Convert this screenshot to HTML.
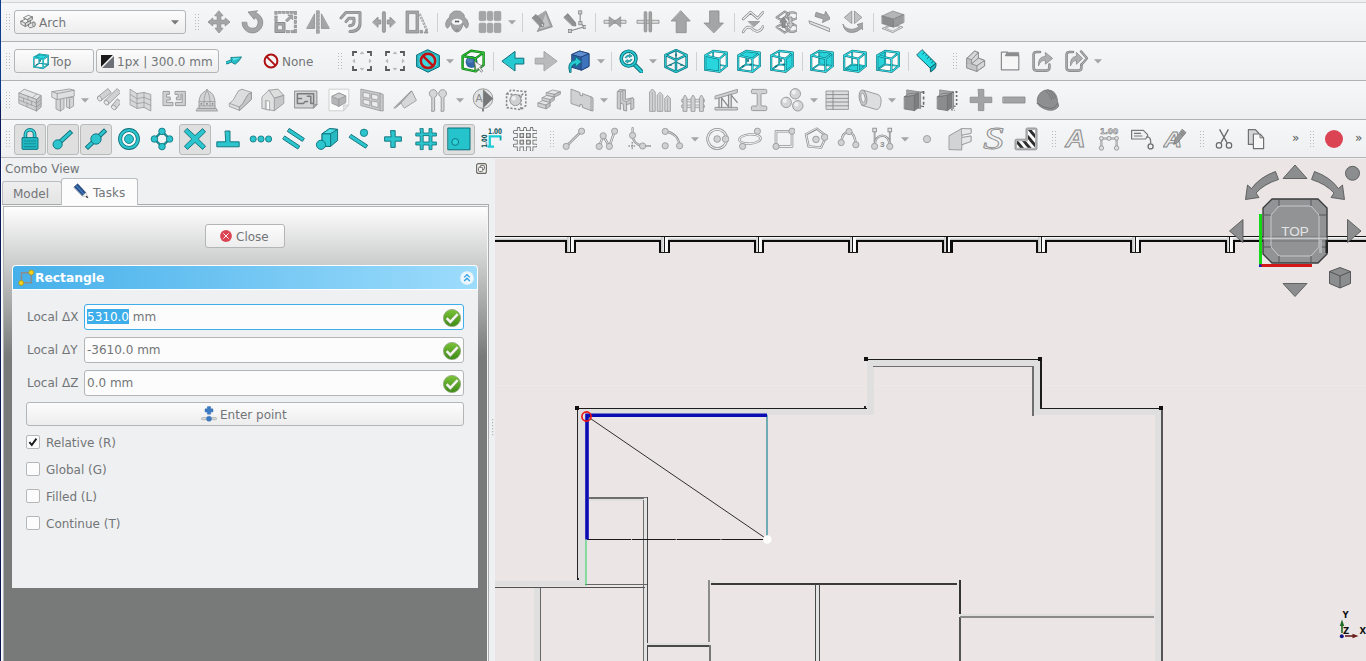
<!DOCTYPE html><html><head><meta charset="utf-8"><title>FreeCAD</title><style>
html,body{margin:0;padding:0;}
body{width:1366px;height:661px;overflow:hidden;position:relative;background:#eff0f1;font-family:"DejaVu Sans","Liberation Sans",sans-serif;font-size:12px;color:#727578;}
div,svg,span{position:absolute;box-sizing:border-box;}
.tb{left:1px;width:1365px;background:linear-gradient(#f6f7f8,#eeeff0);}
.ln{left:1px;width:1365px;height:1px;}
.btn{border:1px solid #b4b5b6;border-radius:3px;background:linear-gradient(#fcfcfc,#ededee);}
.prs{border:1px solid #b9baba;border-radius:3px;background:#dfdfdf;}
.t{white-space:nowrap;line-height:14px;}
.sep{width:1px;background:#d0d1d2;}
.cb{width:14px;height:14px;left:26px;border:1px solid #b6b7b8;border-radius:2px;background:#fcfcfc;}
.inp{left:84px;width:380px;height:26px;border:1px solid #b4b5b6;border-radius:3px;background:#fcfcfc;}
</style></head><body>
<div style="left:0;top:0;width:1px;height:661px;background:linear-gradient(#0d3f8e 0,#0c3a8a 90px,#0a1a5c 110px,#0a1250 100%)"></div>
<div style="left:1px;top:0;width:1px;height:661px;background:#fbfcfd"></div>
<div style="left:1px;top:0;width:1365px;height:2px;background:#eeeff0"></div>
<div class="ln" style="top:2px;background:#d2d3d4"></div>
<div class="tb" style="top:3px;height:38px"></div>
<div class="tb" style="top:42px;height:38px"></div>
<div class="tb" style="top:81px;height:38px"></div>
<div class="tb" style="top:120px;height:37px"></div>
<div class="ln" style="top:41px;background:#b0b1b2"></div>
<div class="ln" style="top:80px;background:#b0b1b2"></div>
<div class="ln" style="top:119px;background:#b0b1b2"></div>
<div class="ln" style="top:157px;background:#b4b5b6"></div>
<svg style="left:6px;top:14px" width="5" height="18" viewBox="0 0 5 18"><rect x="0" y="0" width="1" height="1" fill="#b9babb"/><rect x="3" y="0" width="1" height="1" fill="#b9babb"/><rect x="0" y="3" width="1" height="1" fill="#b9babb"/><rect x="3" y="3" width="1" height="1" fill="#b9babb"/><rect x="0" y="6" width="1" height="1" fill="#b9babb"/><rect x="3" y="6" width="1" height="1" fill="#b9babb"/><rect x="0" y="9" width="1" height="1" fill="#b9babb"/><rect x="3" y="9" width="1" height="1" fill="#b9babb"/><rect x="0" y="12" width="1" height="1" fill="#b9babb"/><rect x="3" y="12" width="1" height="1" fill="#b9babb"/><rect x="0" y="15" width="1" height="1" fill="#b9babb"/><rect x="3" y="15" width="1" height="1" fill="#b9babb"/></svg>
<div class="btn" style="left:14px;top:10px;width:172px;height:24px"></div>
<svg style="left:20.4px;top:13px" width="16" height="16" viewBox="0 0 24 24"><path d="M1.4 12.4L9 8.6L15.6 11.6L8 15.8Z" fill="#f5f5f5" stroke="#707172" stroke-width="1.25" stroke-linejoin="round" stroke-linecap="round"/><path d="M1.4 12.4V16.6L8 20.4V15.8Z" fill="#e6e6e6" stroke="#707172" stroke-width="1.25" stroke-linejoin="round" stroke-linecap="round"/><path d="M8 15.8V20.4L15.6 16V11.6Z" fill="#d4d4d4" stroke="#707172" stroke-width="1.25" stroke-linejoin="round" stroke-linecap="round"/><path d="M5.6 7L12.4 3.4L18.6 6L11.8 9.8Z" fill="#f5f5f5" stroke="#707172" stroke-width="1.25" stroke-linejoin="round" stroke-linecap="round"/><path d="M11.8 9.8V13.4L18.6 9.8V6Z" fill="#d4d4d4" stroke="#707172" stroke-width="1.25" stroke-linejoin="round" stroke-linecap="round"/><path d="M12.6 17.6L19.6 13.4Q22.8 12.8 22.8 17Q22.4 20.4 19.6 20.8L14.8 22.4Q12 21.6 12.6 17.6Z" fill="#e8e8e8" stroke="#707172" stroke-width="1.25" stroke-linejoin="round" stroke-linecap="round"/><ellipse cx="20.8" cy="17" rx="1.9" ry="3.6" fill="#d3dcd3" stroke="#707172" stroke-width="1.1"/></svg>
<span class="t" style="left:39px;top:16px">Arch</span>
<svg style="left:170.5px;top:19.5px" width="8" height="5" viewBox="0 0 8 5"><path d="M0 0.3H8L4 4.6Z" fill="#77797a"/></svg>
<svg style="left:195px;top:14px" width="5" height="18" viewBox="0 0 5 18"><rect x="0" y="0" width="1" height="1" fill="#b9babb"/><rect x="3" y="0" width="1" height="1" fill="#b9babb"/><rect x="0" y="3" width="1" height="1" fill="#b9babb"/><rect x="3" y="3" width="1" height="1" fill="#b9babb"/><rect x="0" y="6" width="1" height="1" fill="#b9babb"/><rect x="3" y="6" width="1" height="1" fill="#b9babb"/><rect x="0" y="9" width="1" height="1" fill="#b9babb"/><rect x="3" y="9" width="1" height="1" fill="#b9babb"/><rect x="0" y="12" width="1" height="1" fill="#b9babb"/><rect x="3" y="12" width="1" height="1" fill="#b9babb"/><rect x="0" y="15" width="1" height="1" fill="#b9babb"/><rect x="3" y="15" width="1" height="1" fill="#b9babb"/></svg>
<svg style="left:207px;top:10px" width="24" height="24" viewBox="0 0 24 24"><path d="M12 1L16 5.8H13.8V10.2H18.2V8L23 12L18.2 16V13.8H13.8V18.2H16L12 23L8 18.2H10.2V13.8H5.8V16L1 12L5.8 8V10.2H10.2V5.8H8Z" fill="#a4a5a6" stroke="#8a8b8c" stroke-width="0.8" stroke-linejoin="round" stroke-linecap="round"/></svg>
<svg style="left:240px;top:10px" width="24" height="24" viewBox="0 0 24 24"><path d="M2 12.6A10.4 10.4 0 1 0 15.6 2.7L17.6 0.8L8 2L14.2 9.5L14.4 7.4A5.6 5.6 0 1 1 6.8 12.6Z" fill="#a4a5a6" stroke="#8a8b8c" stroke-width="0.8" stroke-linejoin="round" stroke-linecap="round"/></svg>
<svg style="left:273px;top:10px" width="24" height="24" viewBox="0 0 24 24"><path d="M2 12.5H12V22.5H2Z" fill="#a4a5a6" stroke="#8a8b8c" stroke-width="1" /><path d="M4.6 15.1H9.4V19.9H4.6Z" fill="#eeeff0" stroke="#8a8b8c" stroke-width="0.8" /><rect x="1.8" y="1.3" width="2.4" height="3" fill="#a4a5a6" stroke="#8a8b8c" stroke-width="0.6"/><rect x="1.8" y="6" width="2.4" height="2.6" fill="#a4a5a6" stroke="#8a8b8c" stroke-width="0.6"/><rect x="1.8" y="9.6" width="2.4" height="2" fill="#a4a5a6" stroke="#8a8b8c" stroke-width="0.6"/><rect x="5.6" y="1.3" width="2.6" height="2.2" fill="#a4a5a6" stroke="#8a8b8c" stroke-width="0.6"/><rect x="9.6" y="1.3" width="2.6" height="2.2" fill="#a4a5a6" stroke="#8a8b8c" stroke-width="0.6"/><rect x="13.6" y="1.3" width="2.6" height="2.2" fill="#a4a5a6" stroke="#8a8b8c" stroke-width="0.6"/><rect x="17.4" y="1.3" width="3" height="2.2" fill="#a4a5a6" stroke="#8a8b8c" stroke-width="0.6"/><rect x="21.2" y="1.3" width="2.4" height="3.4" fill="#a4a5a6" stroke="#8a8b8c" stroke-width="0.6"/><rect x="21.2" y="6.2" width="2.4" height="2.8" fill="#a4a5a6" stroke="#8a8b8c" stroke-width="0.6"/><rect x="21.2" y="10.6" width="2.4" height="2.8" fill="#a4a5a6" stroke="#8a8b8c" stroke-width="0.6"/><rect x="21.2" y="15" width="2.4" height="2.8" fill="#a4a5a6" stroke="#8a8b8c" stroke-width="0.6"/><rect x="21.2" y="19.4" width="2.4" height="3.4" fill="#a4a5a6" stroke="#8a8b8c" stroke-width="0.6"/><rect x="18" y="20.6" width="3" height="2.2" fill="#a4a5a6" stroke="#8a8b8c" stroke-width="0.6"/><rect x="13.6" y="20.6" width="3" height="2.2" fill="#a4a5a6" stroke="#8a8b8c" stroke-width="0.6"/><path d="M12.5 10.2L16.3 6.4L14.8 4.9H19.6V9.7L18.1 8.2L14.3 12Z" fill="#a4a5a6" stroke="#8a8b8c" stroke-width="0.7" /></svg>
<svg style="left:306px;top:10px" width="24" height="24" viewBox="0 0 24 24"><path d="M1 18.4H8.6V4.2Z" fill="#a4a5a6" stroke="#8a8b8c" stroke-width="0.8" stroke-linejoin="round" stroke-linecap="round"/><path d="M23 18.4H15.4V4.2Z" fill="#a4a5a6" stroke="#8a8b8c" stroke-width="0.8" stroke-linejoin="round" stroke-linecap="round"/><rect x="10.4" y="0.8" width="3" height="3" fill="#a4a5a6" stroke="#8a8b8c" stroke-width="0.5"/><rect x="10.4" y="4.7" width="3" height="3" fill="#a4a5a6" stroke="#8a8b8c" stroke-width="0.5"/><rect x="10.4" y="8.6" width="3" height="3" fill="#a4a5a6" stroke="#8a8b8c" stroke-width="0.5"/><rect x="10.4" y="12.5" width="3" height="3" fill="#a4a5a6" stroke="#8a8b8c" stroke-width="0.5"/><rect x="10.4" y="16.4" width="3" height="3" fill="#a4a5a6" stroke="#8a8b8c" stroke-width="0.5"/><rect x="10.4" y="20.2" width="3" height="3" fill="#a4a5a6" stroke="#8a8b8c" stroke-width="0.5"/></svg>
<svg style="left:339px;top:10px" width="24" height="24" viewBox="0 0 24 24"><path d="M2 8L6.9 2.6H21V13.5Q21 21.4 11 21.6" fill="none" stroke="#8a8b8c" stroke-width="3" stroke-linejoin="round" stroke-linecap="round"/><path d="M2 8L6.9 2.6H21V13.5Q21 21.4 11 21.6" fill="none" stroke="#a4a5a6" stroke-width="1.6" stroke-linejoin="round" stroke-linecap="round"/><path d="M7 11.6L9.8 8.2H15V11.5Q15 15.5 10.6 15.8" fill="none" stroke="#8a8b8c" stroke-width="3" stroke-linejoin="round" stroke-linecap="round"/><path d="M7 11.6L9.8 8.2H15V11.5Q15 15.5 10.6 15.8" fill="none" stroke="#a4a5a6" stroke-width="1.6" stroke-linejoin="round" stroke-linecap="round"/></svg>
<svg style="left:372px;top:10px" width="24" height="24" viewBox="0 0 24 24"><path d="M10.4 2.8Q10.4 1.6 11.9 1.6Q13.4 1.6 13.4 2.8V21.2Q13.4 22.4 11.9 22.4Q10.4 22.4 10.4 21.2Z" fill="#a4a5a6" stroke="#8a8b8c" stroke-width="0.8" /><path d="M0.8 12L6 7V10H8.8V14H6V17Z" fill="#a4a5a6" stroke="#8a8b8c" stroke-width="0.8" stroke-linejoin="round" stroke-linecap="round"/><path d="M23.2 12L18 7V10H15.2V14H18V17Z" fill="#a4a5a6" stroke="#8a8b8c" stroke-width="0.8" stroke-linejoin="round" stroke-linecap="round"/></svg>
<svg style="left:405px;top:10px" width="24" height="24" viewBox="0 0 24 24"><path d="M1 1H13.6V23H1Z" fill="#a4a5a6" stroke="#8a8b8c" stroke-width="0.8" /><path d="M3.6 3.6H11V20.4H3.6Z" fill="#f0f1f2" stroke="#8a8b8c" stroke-width="0.8" /><path d="M14.6 4L22.4 21.5" stroke="#8a8b8c" stroke-width="2.4" stroke-dasharray="2.2 1" fill="none"/><path d="M14.6 4L22.4 21.5" stroke="#c8c9ca" stroke-width="1.2" stroke-dasharray="2.2 1" fill="none"/><path d="M15 20.4H17.6V23H15Z" fill="#a4a5a6" stroke="#8a8b8c" stroke-width="0.7" /><path d="M19 23L23 23L21.4 19.6Z" fill="#a4a5a6" stroke="#8a8b8c" stroke-width="0.7" /></svg>
<div class="sep" style="left:437px;top:13px;height:19px"></div>
<svg style="left:445px;top:10px" width="24" height="24" viewBox="0 0 24 24"><path d="M4.6 7.2Q1.6 9 0.6 13.6Q0.6 17 2.2 18.2Q4.4 17 6 13.4Q6.4 18.4 9.6 21.2Q12 23 14.4 21.2Q17.6 18.4 18 13.4Q19.6 17 21.8 18.2Q23.4 17 23.4 13.6Q22.4 9 19.4 7.2Q19.6 4 17.4 3Q15.6 0.6 12 1Q8.4 0.6 6.6 3Q4.4 4 4.6 7.2Z" fill="#a3a4a5" stroke="#8a8b8c" stroke-width="0.8" stroke-linejoin="round" stroke-linecap="round"/><ellipse cx="12" cy="11.8" rx="5.4" ry="3" fill="#f6f6f6"/><ellipse cx="10.9" cy="11.4" rx="1.1" ry="1" fill="#555"/><ellipse cx="13.1" cy="11.4" rx="1.1" ry="1" fill="#555"/><path d="M10.4 19.6L12 20.6L13.6 19.6M12 20.6V19" stroke="#7c7d7e" stroke-width="0.7" fill="none"/></svg>
<svg style="left:478px;top:10px" width="24" height="24" viewBox="0 0 24 24"><rect x="1.2" y="1.4" width="6.6" height="9.2" rx="1" fill="#a4a5a6" stroke="#97989a" stroke-width="0.7"/><rect x="1.2" y="13.2" width="6.6" height="9.4" rx="1" fill="#a4a5a6" stroke="#97989a" stroke-width="0.7"/><rect x="9.4" y="1.4" width="5.2" height="9.2" rx="1" fill="#a4a5a6" stroke="#97989a" stroke-width="0.7"/><rect x="9.4" y="13.2" width="5.2" height="9.4" rx="1" fill="#a4a5a6" stroke="#97989a" stroke-width="0.7"/><rect x="16.2" y="1.4" width="6.6" height="9.2" rx="1" fill="#a4a5a6" stroke="#97989a" stroke-width="0.7"/><rect x="16.2" y="13.2" width="6.6" height="9.4" rx="1" fill="#a4a5a6" stroke="#97989a" stroke-width="0.7"/></svg>
<svg style="left:508px;top:19.5px" width="8" height="5" viewBox="0 0 8 5"><path d="M0 0.3H8L4 4.6Z" fill="#a4a5a6"/></svg>
<div class="sep" style="left:522px;top:13px;height:19px"></div>
<svg style="left:529px;top:10px" width="24" height="24" viewBox="0 0 24 24"><path d="M17 1.3L23.4 16.8L8.2 21.5L12.2 14L6.5 8Z" fill="#a4a5a6" stroke="#8a8b8c" stroke-width="0.8" stroke-linejoin="round" stroke-linecap="round"/><path d="M16.4 4L20.8 15.8L11 19Z" fill="#c4c5c6" stroke="none" stroke-width="1" /><path d="M3.2 7.8L7 4.4L14.8 13.6L14.4 17L11 16.2Z" fill="#8f9091" stroke="#7b7c7d" stroke-width="0.7" stroke-linejoin="round" stroke-linecap="round"/><path d="M12.6 14.8L14.4 17L13.8 13.9Z" fill="#f4f4f4" stroke="none" stroke-width="1" /></svg>
<svg style="left:562px;top:10px" width="24" height="24" viewBox="0 0 24 24"><path d="M2 7.2L5.8 3.6L13.6 12.8L13.8 16L10.4 15.6Z" fill="#8f9091" stroke="#7b7c7d" stroke-width="0.7" stroke-linejoin="round" stroke-linecap="round"/><path d="M18.2 3V13L22.4 16.8L8 21" stroke="#8a8b8c" stroke-width="1.1" fill="none"/><rect x="16.6" y="0.8" width="3.2" height="3.2" fill="#c8c9ca" stroke="#8a8b8c" stroke-width="0.8"/><rect x="16.8" y="11.6" width="3.2" height="3.2" fill="#c8c9ca" stroke="#8a8b8c" stroke-width="0.8"/><rect x="21.2" y="15.4" width="3.2" height="3.2" fill="#c8c9ca" stroke="#8a8b8c" stroke-width="0.8"/><rect x="6.4" y="19.4" width="3.2" height="3.2" fill="#c8c9ca" stroke="#8a8b8c" stroke-width="0.8"/></svg>
<div class="sep" style="left:595px;top:13px;height:19px"></div>
<svg style="left:603px;top:10px" width="24" height="24" viewBox="0 0 24 24"><path d="M1 10.3H23V13.3H1Z" fill="#dcdddd" stroke="#8a8b8c" stroke-width="0.8" /><path d="M6.5 7L12.6 11.8L6.5 16.8Z" fill="#a4a5a6" stroke="#8a8b8c" stroke-width="0.8" stroke-linejoin="round" stroke-linecap="round"/><path d="M17.4 7L11.4 11.8L17.4 16.8Z" fill="#a4a5a6" stroke="#8a8b8c" stroke-width="0.8" stroke-linejoin="round" stroke-linecap="round"/></svg>
<svg style="left:636px;top:10px" width="24" height="24" viewBox="0 0 24 24"><path d="M1 10.3H23V13.3H1Z" fill="#dcdddd" stroke="#8a8b8c" stroke-width="0.8" /><path d="M8.2 2.6Q8.2 1.6 9.5 1.6Q10.8 1.6 10.8 2.6V21Q10.8 22 9.5 22Q8.2 22 8.2 21Z" fill="#a4a5a6" stroke="#8a8b8c" stroke-width="0.8" /><path d="M13 2.6Q13 1.6 14.3 1.6Q15.6 1.6 15.6 2.6V21Q15.6 22 14.3 22Q13 22 13 21Z" fill="#a4a5a6" stroke="#8a8b8c" stroke-width="0.8" /></svg>
<svg style="left:669px;top:10px" width="24" height="24" viewBox="0 0 24 24"><path d="M11.9 0.9L21.3 11H17.2V22.7H7.2V11H2.5Z" fill="#a4a5a6" stroke="#8a8b8c" stroke-width="0.8" stroke-linejoin="round" stroke-linecap="round"/></svg>
<svg style="left:702px;top:10px" width="24" height="24" viewBox="0 0 24 24"><path d="M12 22.7L21.4 13H17V0.9H7.6V13H2.3Z" fill="#a4a5a6" stroke="#8a8b8c" stroke-width="0.8" stroke-linejoin="round" stroke-linecap="round"/></svg>
<div class="sep" style="left:734px;top:13px;height:19px"></div>
<svg style="left:740px;top:10px" width="24" height="24" viewBox="0 0 24 24"><path d="M3.2 9L10.5 2.2L17.7 8.4L23 2.4" fill="none" stroke="#8a8b8c" stroke-width="2.6" stroke-linejoin="round" stroke-linecap="round"/><path d="M3.2 9L10.5 2.2L17.7 8.4L23 2.4" fill="none" stroke="#f4f4f5" stroke-width="1.1" stroke-linejoin="round" stroke-linecap="round"/><path d="M8.5 11.5H19.7L13.8 16.8Z" fill="#a4a5a6" stroke="#8a8b8c" stroke-width="0.7" stroke-linejoin="round" stroke-linecap="round"/><path d="M3.2 22Q6 16 10.5 17.4Q14 21 17 21.4Q21 21 23 16.6" fill="none" stroke="#8a8b8c" stroke-width="2.6" stroke-linejoin="round" stroke-linecap="round"/><path d="M3.2 22Q6 16 10.5 17.4Q14 21 17 21.4Q21 21 23 16.6" fill="none" stroke="#f4f4f5" stroke-width="1.1" stroke-linejoin="round" stroke-linecap="round"/></svg>
<svg style="left:773px;top:10px" width="24" height="24" viewBox="0 0 24 24"><g transform="translate(1.6 0)"><path d="M2 7.4L10 1.6L14.6 4.2L6.6 10Z" fill="none" stroke="#8b8c8d" stroke-width="2.3" stroke-linejoin="round" stroke-linecap="round"/><path d="M2 7.4L10 1.6L14.6 4.2L6.6 10Z" fill="none" stroke="#b9babb" stroke-width="1" stroke-linejoin="round" stroke-linecap="round"/><ellipse cx="17.4" cy="6" rx="5.6" ry="3.6" fill="none" stroke="#8b8c8d" stroke-width="2.3"/><ellipse cx="17.4" cy="6" rx="5.6" ry="3.6" fill="none" stroke="#b9babb" stroke-width="1"/><path d="M2 17L6.6 14.4L14.6 20L10 22.6Z" fill="none" stroke="#8b8c8d" stroke-width="2.3" stroke-linejoin="round" stroke-linecap="round"/><path d="M2 17L6.6 14.4L14.6 20L10 22.6Z" fill="none" stroke="#b9babb" stroke-width="1" stroke-linejoin="round" stroke-linecap="round"/><ellipse cx="17.4" cy="18.2" rx="5.6" ry="3.6" fill="none" stroke="#8b8c8d" stroke-width="2.3"/><ellipse cx="17.4" cy="18.2" rx="5.6" ry="3.6" fill="none" stroke="#b9babb" stroke-width="1"/><path d="M5.4 12.2L9 7.4L12.6 12.2H10.6V17.4H7.4V12.2Z" fill="#8f9091" stroke="#77787a" stroke-width="0.7" stroke-linejoin="round" stroke-linecap="round"/><path d="M14.2 7H17.4V13.4H19.4L15.8 18.4L12.2 13.4H14.2Z" fill="#c6c7c8" stroke="#77787a" stroke-width="0.7" stroke-linejoin="round" stroke-linecap="round"/></g></svg>
<svg style="left:806px;top:10px" width="24" height="24" viewBox="0 0 24 24"><path d="M3 11.2L3.8 13.6L24 21.8L23.6 18.8Z" fill="#e4e5e5" stroke="#8a8b8c" stroke-width="0.9" stroke-linejoin="round" stroke-linecap="round"/><path d="M10 2.6L9 6.4L17.4 9L16.4 12.6L24.4 8.8L19.6 1.2L18.6 4.8Z" fill="#a4a5a6" stroke="#8a8b8c" stroke-width="0.8" stroke-linejoin="round" stroke-linecap="round"/></svg>
<svg style="left:839px;top:10px" width="24" height="24" viewBox="0 0 24 24"><path d="M5.6 7.2L12.8 1V13.2Z" fill="#c0c1c2" stroke="#8a8b8c" stroke-width="0.8" stroke-linejoin="round" stroke-linecap="round"/><path d="M22.6 7.2L15.4 1V13.2Z" fill="#c0c1c2" stroke="#8a8b8c" stroke-width="0.8" stroke-linejoin="round" stroke-linecap="round"/><path d="M4 14.4Q6 19 13 19.4Q17.5 19 20 16.4L18 14.6L24.6 12.6L24 20L22.4 18.4Q18 22.6 12.4 22.6Q5 22 4 14.4Z" fill="#a4a5a6" stroke="#8a8b8c" stroke-width="0.8" stroke-linejoin="round" stroke-linecap="round"/></svg>
<div class="sep" style="left:873px;top:13px;height:19px"></div>
<svg style="left:881px;top:10px" width="24" height="24" viewBox="0 0 24 24"><path d="M1.4 18.6L11.8 22.6L22 17.2L12 14Z" fill="#eeeeef" stroke="#8a8b8c" stroke-width="0.8" stroke-linejoin="round" stroke-linecap="round"/><path d="M4.6 18.4L11.8 21L18.8 17.4L12 15.4Z" fill="#eeeeef" stroke="#8a8b8c" stroke-width="0.6" stroke-linejoin="round" stroke-linecap="round"/><path d="M1.2 5.9L11.8 1L22.6 4.6L12.4 9.2Z" fill="#b4b5b6" stroke="#858687" stroke-width="0.7" stroke-linejoin="round" stroke-linecap="round"/><path d="M1.2 5.9L12.4 9.2V17.2L1.2 13.6Z" fill="#8b8c8d" stroke="#7a7b7c" stroke-width="0.7" stroke-linejoin="round" stroke-linecap="round"/><path d="M22.6 4.6L12.4 9.2V17.2L22.6 12.6Z" fill="#9a9b9c" stroke="#7a7b7c" stroke-width="0.7" stroke-linejoin="round" stroke-linecap="round"/></svg>
<svg style="left:6px;top:53px" width="5" height="18" viewBox="0 0 5 18"><rect x="0" y="0" width="1" height="1" fill="#b9babb"/><rect x="3" y="0" width="1" height="1" fill="#b9babb"/><rect x="0" y="3" width="1" height="1" fill="#b9babb"/><rect x="3" y="3" width="1" height="1" fill="#b9babb"/><rect x="0" y="6" width="1" height="1" fill="#b9babb"/><rect x="3" y="6" width="1" height="1" fill="#b9babb"/><rect x="0" y="9" width="1" height="1" fill="#b9babb"/><rect x="3" y="9" width="1" height="1" fill="#b9babb"/><rect x="0" y="12" width="1" height="1" fill="#b9babb"/><rect x="3" y="12" width="1" height="1" fill="#b9babb"/><rect x="0" y="15" width="1" height="1" fill="#b9babb"/><rect x="3" y="15" width="1" height="1" fill="#b9babb"/></svg>
<div class="btn" style="left:14px;top:49px;width:80px;height:24px"></div>
<svg style="left:33px;top:53px" width="16" height="16" viewBox="0 0 24 24"><path d="M1.2 6.4L9.2 1.9L22.8 3.6L22.8 17L15.4 22.8L1.2 20.8Z" fill="#fdfdfd" stroke="none" stroke-width="1" /><path d="M9.2 1.9L9.2 15.3L22.8 17M9.2 15.3L1.2 20.8" fill="none" stroke="#0e7580" stroke-width="1.7" stroke-linejoin="round" stroke-linecap="round"/><path d="M9.2 1.9L9.2 15.3L22.8 17M9.2 15.3L1.2 20.8" fill="none" stroke="#2fd2d9" stroke-width="0.8" stroke-linejoin="round" stroke-linecap="round"/><path d="M1.2 6.4L15.4 9.7L22.8 3.6L9.2 1.9Z" fill="#2ad6de" stroke="none" stroke-width="1" /><path d="M1.2 6.4L15.4 9.7L15.4 22.8L1.2 20.8ZM1.2 6.4L9.2 1.9L22.8 3.6L15.4 9.7ZM15.4 9.7L22.8 3.6L22.8 17L15.4 22.8Z" fill="none" stroke="#0a6570" stroke-width="2.1" stroke-linejoin="round" stroke-linecap="round"/><path d="M1.2 6.4L15.4 9.7L15.4 22.8L1.2 20.8ZM1.2 6.4L9.2 1.9L22.8 3.6L15.4 9.7ZM15.4 9.7L22.8 3.6L22.8 17L15.4 22.8Z" fill="none" stroke="#33dbe2" stroke-width="1.15" stroke-linejoin="round" stroke-linecap="round"/><ellipse cx="11" cy="11.5" rx="0.9" ry="1.8" fill="#0b6f7a"/><ellipse cx="6" cy="17.3" rx="1.6" ry="0.8" transform="rotate(-35 6 17.3)" fill="#0b6f7a"/><ellipse cx="13.8" cy="15.2" rx="1.5" ry="0.7" fill="#0b6f7a"/></svg>
<span class="t" style="left:51px;top:55px">Top</span>
<div class="btn" style="left:96px;top:49px;width:123px;height:24px"></div>
<svg style="left:101px;top:55px" width="13" height="13" viewBox="0 0 14 14"><rect width="14" height="14" fill="#6d7177"/><path d="M0 0H13L0 13Z" fill="#1a1a1a"/><path d="M14 0L0 14" stroke="#f4f4f4" stroke-width="1.6"/></svg>
<span class="t" style="left:117px;top:55px">1px | 300.0 mm</span>
<svg style="left:226px;top:53px" width="16" height="16" viewBox="0 0 24 24"><path d="M1.4 14.6L10 11" stroke="#0b6f7a" stroke-width="4.6" stroke-linecap="round"/><path d="M1.4 14.6L10 11" stroke="#2ccbd3" stroke-width="2.8" stroke-linecap="round"/><path d="M7.6 6.8L23.4 5.8Q20 13 14 16.8Q10 16 8.4 13.4Q7 10 7.6 6.8Z" fill="#25bcc6" stroke="#0b6f7a" stroke-width="1" stroke-linejoin="round" stroke-linecap="round"/><path d="M10 8L21 7Q17 9 11 11.4Z" fill="#5fe3e8" stroke="none" stroke-width="1" /></svg>
<svg style="left:263px;top:53px" width="16" height="16" viewBox="0 0 24 24"><circle cx="12" cy="12" r="9.6" fill="#f6f6f6" stroke="#ae1212" stroke-width="3"/><path d="M5.4 5.4L18.6 18.6" stroke="#ae1212" stroke-width="3"/></svg>
<span class="t" style="left:282px;top:55px">None</span>
<svg style="left:338px;top:53px" width="5" height="18" viewBox="0 0 5 18"><rect x="0" y="0" width="1" height="1" fill="#b9babb"/><rect x="3" y="0" width="1" height="1" fill="#b9babb"/><rect x="0" y="3" width="1" height="1" fill="#b9babb"/><rect x="3" y="3" width="1" height="1" fill="#b9babb"/><rect x="0" y="6" width="1" height="1" fill="#b9babb"/><rect x="3" y="6" width="1" height="1" fill="#b9babb"/><rect x="0" y="9" width="1" height="1" fill="#b9babb"/><rect x="3" y="9" width="1" height="1" fill="#b9babb"/><rect x="0" y="12" width="1" height="1" fill="#b9babb"/><rect x="3" y="12" width="1" height="1" fill="#b9babb"/><rect x="0" y="15" width="1" height="1" fill="#b9babb"/><rect x="3" y="15" width="1" height="1" fill="#b9babb"/></svg>
<svg style="left:350px;top:49px" width="24" height="24" viewBox="0 0 24 24"><path d="M3 7V3H7M17 3H21V7M21 17V21H17M7 21H3V17" fill="none" stroke="#58595a" stroke-width="1.8"/><path d="M10.4 4.6L12 2.8L13.6 4.6Z" fill="#e6e6e7" stroke="#a0a1a2" stroke-width="0.7"/><path d="M10.4 19.4L12 21.2L13.6 19.4Z" fill="#e6e6e7" stroke="#a0a1a2" stroke-width="0.7"/><path d="M4.6 10.4L2.8 12L4.6 13.6Z" fill="#e6e6e7" stroke="#a0a1a2" stroke-width="0.7"/><path d="M19.4 10.4L21.2 12L19.4 13.6Z" fill="#e6e6e7" stroke="#a0a1a2" stroke-width="0.7"/></svg>
<svg style="left:383px;top:49px" width="24" height="24" viewBox="0 0 24 24"><path d="M3 7V3H7M17 3H21V7M21 17V21H17M7 21H3V17" fill="none" stroke="#58595a" stroke-width="1.8"/><path d="M10.4 4.6L12 2.8L13.6 4.6Z" fill="#e6e6e7" stroke="#a0a1a2" stroke-width="0.7"/><path d="M10.4 19.4L12 21.2L13.6 19.4Z" fill="#e6e6e7" stroke="#a0a1a2" stroke-width="0.7"/><path d="M4.6 10.4L2.8 12L4.6 13.6Z" fill="#e6e6e7" stroke="#a0a1a2" stroke-width="0.7"/><path d="M19.4 10.4L21.2 12L19.4 13.6Z" fill="#e6e6e7" stroke="#a0a1a2" stroke-width="0.7"/></svg>
<svg style="left:416px;top:49px" width="24" height="24" viewBox="0 0 24 24"><path d="M12 0.8L23.4 6.4V17.6L12 23.2L0.6 17.6V6.4Z" fill="#27b9c4" stroke="#0b6f7a" stroke-width="1" stroke-linejoin="round" stroke-linecap="round"/><path d="M12 3.2L21.2 7.6V16.4L12 20.8L2.8 16.4V7.6Z" fill="#3fd6dd" stroke="none" stroke-width="1" /><circle cx="12" cy="11.9" r="7.2" fill="none" stroke="#c01212" stroke-width="2.5"/><path d="M7 6.9L17 16.9" stroke="#c01212" stroke-width="2.5"/></svg>
<svg style="left:446px;top:58.5px" width="8" height="5" viewBox="0 0 8 5"><path d="M0 0.3H8L4 4.6Z" fill="#a4a5a6"/></svg>
<svg style="left:461px;top:49px" width="24" height="24" viewBox="0 0 24 24"><path d="M1.6 7L10 1.8L22.6 3.6V16L14.6 22.4L1.6 19.6Z" fill="#fcfcfc"/><circle cx="10.6" cy="13" r="6" fill="#3465a4"/><circle cx="9" cy="11" r="3" fill="#5a86c0" opacity="0.7"/><path d="M1.6 7L10 1.8L22.6 3.6V16L14.6 22.4L1.6 19.6ZM1.6 7L14.6 9.4L22.6 3.6M14.6 9.4V22.4" fill="none" stroke="#0f7a14" stroke-width="2.4" stroke-linejoin="round" stroke-linecap="round"/><path d="M1.6 7L10 1.8L22.6 3.6V16L14.6 22.4L1.6 19.6ZM1.6 7L14.6 9.4L22.6 3.6M14.6 9.4V22.4" fill="none" stroke="#2fc93a" stroke-width="1" stroke-linejoin="round" stroke-linecap="round"/><path d="M13.6 12.4L21.4 17.4L18.6 18L21.8 22L20.2 23.2L17.2 19.2L15.4 21.4Z" fill="#f2f2f2" stroke="#77787a" stroke-width="0.8" stroke-linejoin="round" stroke-linecap="round"/></svg>
<div class="sep" style="left:493px;top:52px;height:19px"></div>
<svg style="left:501px;top:49px" width="24" height="24" viewBox="0 0 24 24"><path d="M1.2 12L14 2.4V9.2H22.8V15H14V21.6Z" fill="#27c9d1" stroke="#0b6f7a" stroke-width="1" stroke-linejoin="round" stroke-linecap="round"/></svg>
<svg style="left:534px;top:49px" width="24" height="24" viewBox="0 0 24 24"><path d="M22.8 12L10 2.4V9.2H1.2V15H10V21.6Z" fill="#b9babb" stroke="#a3a4a5" stroke-width="1" stroke-linejoin="round" stroke-linecap="round"/></svg>
<svg style="left:567px;top:49px" width="24" height="24" viewBox="0 0 24 24"><path d="M5 5.4L12.6 2L22 4.6V17.4L14.4 21.2L5 18.4Z" fill="#2f5fa3" stroke="#1d3f74" stroke-width="0.9" stroke-linejoin="round" stroke-linecap="round"/><path d="M5 5.4L12.6 2L22 4.6L14.4 8Z" fill="#5f8fd0" stroke="#1d3f74" stroke-width="0.8" stroke-linejoin="round" stroke-linecap="round"/><path d="M14.4 8L22 4.6V17.4L14.4 21.2Z" fill="#3d72bd" stroke="#1d3f74" stroke-width="0.8" stroke-linejoin="round" stroke-linecap="round"/><path d="M2.6 23.2Q-0.6 13 8.4 10.8V7.6L14.6 12.8L8.4 18V14.8Q3.6 15.4 4 23Z" fill="#27c9d1" stroke="#0b6f7a" stroke-width="0.9" stroke-linejoin="round" stroke-linecap="round"/></svg>
<svg style="left:597px;top:58.5px" width="8" height="5" viewBox="0 0 8 5"><path d="M0 0.3H8L4 4.6Z" fill="#a4a5a6"/></svg>
<div class="sep" style="left:611px;top:52px;height:19px"></div>
<svg style="left:619px;top:49px" width="24" height="24" viewBox="0 0 24 24"><path d="M15.6 15.6L22.6 22.6" stroke="#0b6f7a" stroke-width="4.4" stroke-linecap="round"/><path d="M15.6 15.6L22.6 22.6" stroke="#27c9d1" stroke-width="2.4" stroke-linecap="round"/><circle cx="9.6" cy="9.6" r="7.4" fill="#f4fbfc" stroke="#0b6f7a" stroke-width="3.6"/><circle cx="9.6" cy="9.6" r="7.4" fill="none" stroke="#27c9d1" stroke-width="1.8"/><path d="M6 8.6Q7.4 5.6 10.6 6.2L10.2 5L13.2 7L10.4 8.6L10.6 7.6Q8.4 7.2 7.4 9ZM13.2 10.6Q11.8 13.6 8.6 13L9 14.2L6 12.2L8.8 10.6L8.6 11.6Q10.8 12 11.8 10.2Z" fill="#27c9d1" stroke="#0b6f7a" stroke-width="0.6"/></svg>
<svg style="left:649px;top:58.5px" width="8" height="5" viewBox="0 0 8 5"><path d="M0 0.3H8L4 4.6Z" fill="#a4a5a6"/></svg>
<svg style="left:664px;top:49px" width="24" height="24" viewBox="0 0 24 24"><path d="M12 1V13L1.4 18M12 13L22.6 18" fill="none" stroke="#14808a" stroke-width="1.3" stroke-linejoin="round" stroke-linecap="round"/><path d="M12 1L22.6 6V18L12 23L1.4 18V6ZM1.4 6L12 11L22.6 6M12 11V23" fill="none" stroke="#0b6f7a" stroke-width="2.4" stroke-linejoin="round" stroke-linecap="round"/><path d="M12 1L22.6 6V18L12 23L1.4 18V6ZM1.4 6L12 11L22.6 6M12 11V23" fill="none" stroke="#2fd0d6" stroke-width="1" stroke-linejoin="round" stroke-linecap="round"/><ellipse cx="6.6" cy="16" rx="1.5" ry="0.8" fill="#0b6f7a"/><ellipse cx="17.4" cy="16" rx="1.5" ry="0.8" fill="#0b6f7a"/><ellipse cx="12" cy="6" rx="0.8" ry="1.4" fill="#0b6f7a"/></svg>
<div class="sep" style="left:696px;top:52px;height:19px"></div>
<svg style="left:704px;top:49px" width="24" height="24" viewBox="0 0 24 24"><path d="M1.2 6.4L9.2 1.9L22.8 3.6L22.8 17L15.4 22.8L1.2 20.8Z" fill="#fdfdfd" stroke="none" stroke-width="1" /><path d="M9.2 1.9L9.2 15.3L22.8 17M9.2 15.3L1.2 20.8" fill="none" stroke="#0e7580" stroke-width="1.7" stroke-linejoin="round" stroke-linecap="round"/><path d="M9.2 1.9L9.2 15.3L22.8 17M9.2 15.3L1.2 20.8" fill="none" stroke="#2fd2d9" stroke-width="0.8" stroke-linejoin="round" stroke-linecap="round"/><path d="M1.2 6.4L15.4 9.7L15.4 22.8L1.2 20.8Z" fill="#2ad6de" stroke="none" stroke-width="1" /><path d="M1.2 6.4L15.4 9.7L15.4 22.8L1.2 20.8ZM1.2 6.4L9.2 1.9L22.8 3.6L15.4 9.7ZM15.4 9.7L22.8 3.6L22.8 17L15.4 22.8Z" fill="none" stroke="#0a6570" stroke-width="2.1" stroke-linejoin="round" stroke-linecap="round"/><path d="M1.2 6.4L15.4 9.7L15.4 22.8L1.2 20.8ZM1.2 6.4L9.2 1.9L22.8 3.6L15.4 9.7ZM15.4 9.7L22.8 3.6L22.8 17L15.4 22.8Z" fill="none" stroke="#33dbe2" stroke-width="1.15" stroke-linejoin="round" stroke-linecap="round"/></svg>
<svg style="left:737px;top:49px" width="24" height="24" viewBox="0 0 24 24"><path d="M1.2 6.4L9.2 1.9L22.8 3.6L22.8 17L15.4 22.8L1.2 20.8Z" fill="#fdfdfd" stroke="none" stroke-width="1" /><path d="M9.2 1.9L9.2 15.3L22.8 17M9.2 15.3L1.2 20.8" fill="none" stroke="#0e7580" stroke-width="1.7" stroke-linejoin="round" stroke-linecap="round"/><path d="M9.2 1.9L9.2 15.3L22.8 17M9.2 15.3L1.2 20.8" fill="none" stroke="#2fd2d9" stroke-width="0.8" stroke-linejoin="round" stroke-linecap="round"/><path d="M1.2 6.4L15.4 9.7L22.8 3.6L9.2 1.9Z" fill="#2ad6de" stroke="none" stroke-width="1" /><path d="M1.2 6.4L15.4 9.7L15.4 22.8L1.2 20.8ZM1.2 6.4L9.2 1.9L22.8 3.6L15.4 9.7ZM15.4 9.7L22.8 3.6L22.8 17L15.4 22.8Z" fill="none" stroke="#0a6570" stroke-width="2.1" stroke-linejoin="round" stroke-linecap="round"/><path d="M1.2 6.4L15.4 9.7L15.4 22.8L1.2 20.8ZM1.2 6.4L9.2 1.9L22.8 3.6L15.4 9.7ZM15.4 9.7L22.8 3.6L22.8 17L15.4 22.8Z" fill="none" stroke="#33dbe2" stroke-width="1.15" stroke-linejoin="round" stroke-linecap="round"/><ellipse cx="11" cy="11.5" rx="0.9" ry="1.8" fill="#0b6f7a"/><ellipse cx="6" cy="17.3" rx="1.6" ry="0.8" transform="rotate(-35 6 17.3)" fill="#0b6f7a"/><ellipse cx="13.8" cy="15.2" rx="1.5" ry="0.7" fill="#0b6f7a"/></svg>
<svg style="left:770px;top:49px" width="24" height="24" viewBox="0 0 24 24"><path d="M1.2 6.4L9.2 1.9L22.8 3.6L22.8 17L15.4 22.8L1.2 20.8Z" fill="#fdfdfd" stroke="none" stroke-width="1" /><path d="M9.2 1.9L9.2 15.3L22.8 17M9.2 15.3L1.2 20.8" fill="none" stroke="#0e7580" stroke-width="1.7" stroke-linejoin="round" stroke-linecap="round"/><path d="M9.2 1.9L9.2 15.3L22.8 17M9.2 15.3L1.2 20.8" fill="none" stroke="#2fd2d9" stroke-width="0.8" stroke-linejoin="round" stroke-linecap="round"/><path d="M15.4 9.7L22.8 3.6L22.8 17L15.4 22.8Z" fill="#2ad6de" stroke="none" stroke-width="1" /><path d="M1.2 6.4L15.4 9.7L15.4 22.8L1.2 20.8ZM1.2 6.4L9.2 1.9L22.8 3.6L15.4 9.7ZM15.4 9.7L22.8 3.6L22.8 17L15.4 22.8Z" fill="none" stroke="#0a6570" stroke-width="2.1" stroke-linejoin="round" stroke-linecap="round"/><path d="M1.2 6.4L15.4 9.7L15.4 22.8L1.2 20.8ZM1.2 6.4L9.2 1.9L22.8 3.6L15.4 9.7ZM15.4 9.7L22.8 3.6L22.8 17L15.4 22.8Z" fill="none" stroke="#33dbe2" stroke-width="1.15" stroke-linejoin="round" stroke-linecap="round"/><ellipse cx="11" cy="11.5" rx="0.9" ry="1.8" fill="#0b6f7a"/><ellipse cx="6" cy="17.3" rx="1.6" ry="0.8" transform="rotate(-35 6 17.3)" fill="#0b6f7a"/><ellipse cx="13.8" cy="15.2" rx="1.5" ry="0.7" fill="#0b6f7a"/></svg>
<div class="sep" style="left:802px;top:52px;height:19px"></div>
<svg style="left:810px;top:49px" width="24" height="24" viewBox="0 0 24 24"><path d="M1.2 6.4L9.2 1.9L22.8 3.6L22.8 17L15.4 22.8L1.2 20.8Z" fill="#fdfdfd" stroke="none" stroke-width="1" /><path d="M9.2 1.9L22.8 3.6L22.8 17L9.2 15.3Z" fill="#2ad3da" stroke="none" stroke-width="1" /><path d="M9.2 1.9L9.2 15.3L22.8 17M9.2 15.3L1.2 20.8" fill="none" stroke="#0e7580" stroke-width="1.7" stroke-linejoin="round" stroke-linecap="round"/><path d="M9.2 1.9L9.2 15.3L22.8 17M9.2 15.3L1.2 20.8" fill="none" stroke="#2fd2d9" stroke-width="0.8" stroke-linejoin="round" stroke-linecap="round"/><path d="M1.2 6.4L15.4 9.7L15.4 22.8L1.2 20.8ZM1.2 6.4L9.2 1.9L22.8 3.6L15.4 9.7ZM15.4 9.7L22.8 3.6L22.8 17L15.4 22.8Z" fill="none" stroke="#0a6570" stroke-width="2.1" stroke-linejoin="round" stroke-linecap="round"/><path d="M1.2 6.4L15.4 9.7L15.4 22.8L1.2 20.8ZM1.2 6.4L9.2 1.9L22.8 3.6L15.4 9.7ZM15.4 9.7L22.8 3.6L22.8 17L15.4 22.8Z" fill="none" stroke="#33dbe2" stroke-width="1.15" stroke-linejoin="round" stroke-linecap="round"/></svg>
<svg style="left:843px;top:49px" width="24" height="24" viewBox="0 0 24 24"><path d="M1.2 6.4L9.2 1.9L22.8 3.6L22.8 17L15.4 22.8L1.2 20.8Z" fill="#fdfdfd" stroke="none" stroke-width="1" /><path d="M1.2 20.8L15.4 22.8L22.8 17L9.2 15.3Z" fill="#2ad3da" stroke="none" stroke-width="1" /><path d="M9.2 1.9L9.2 15.3L22.8 17M9.2 15.3L1.2 20.8" fill="none" stroke="#0e7580" stroke-width="1.7" stroke-linejoin="round" stroke-linecap="round"/><path d="M9.2 1.9L9.2 15.3L22.8 17M9.2 15.3L1.2 20.8" fill="none" stroke="#2fd2d9" stroke-width="0.8" stroke-linejoin="round" stroke-linecap="round"/><path d="M1.2 6.4L15.4 9.7L15.4 22.8L1.2 20.8ZM1.2 6.4L9.2 1.9L22.8 3.6L15.4 9.7ZM15.4 9.7L22.8 3.6L22.8 17L15.4 22.8Z" fill="none" stroke="#0a6570" stroke-width="2.1" stroke-linejoin="round" stroke-linecap="round"/><path d="M1.2 6.4L15.4 9.7L15.4 22.8L1.2 20.8ZM1.2 6.4L9.2 1.9L22.8 3.6L15.4 9.7ZM15.4 9.7L22.8 3.6L22.8 17L15.4 22.8Z" fill="none" stroke="#33dbe2" stroke-width="1.15" stroke-linejoin="round" stroke-linecap="round"/></svg>
<svg style="left:876px;top:49px" width="24" height="24" viewBox="0 0 24 24"><path d="M1.2 6.4L9.2 1.9L22.8 3.6L22.8 17L15.4 22.8L1.2 20.8Z" fill="#fdfdfd" stroke="none" stroke-width="1" /><path d="M1.2 6.4L9.2 1.9L9.2 15.3L1.2 20.8Z" fill="#2ad3da" stroke="none" stroke-width="1" /><path d="M9.2 1.9L9.2 15.3L22.8 17M9.2 15.3L1.2 20.8" fill="none" stroke="#0e7580" stroke-width="1.7" stroke-linejoin="round" stroke-linecap="round"/><path d="M9.2 1.9L9.2 15.3L22.8 17M9.2 15.3L1.2 20.8" fill="none" stroke="#2fd2d9" stroke-width="0.8" stroke-linejoin="round" stroke-linecap="round"/><path d="M1.2 6.4L15.4 9.7L15.4 22.8L1.2 20.8ZM1.2 6.4L9.2 1.9L22.8 3.6L15.4 9.7ZM15.4 9.7L22.8 3.6L22.8 17L15.4 22.8Z" fill="none" stroke="#0a6570" stroke-width="2.1" stroke-linejoin="round" stroke-linecap="round"/><path d="M1.2 6.4L15.4 9.7L15.4 22.8L1.2 20.8ZM1.2 6.4L9.2 1.9L22.8 3.6L15.4 9.7ZM15.4 9.7L22.8 3.6L22.8 17L15.4 22.8Z" fill="none" stroke="#33dbe2" stroke-width="1.15" stroke-linejoin="round" stroke-linecap="round"/></svg>
<div class="sep" style="left:908px;top:52px;height:19px"></div>
<svg style="left:915px;top:49px" width="24" height="24" viewBox="0 0 24 24"><path d="M7.3 0.9L21 14.5L15.3 19.2L1.9 6.3Z" fill="#22dbe3" stroke="#0a5660" stroke-width="0.9" stroke-linejoin="round" stroke-linecap="round"/><path d="M21 14.5Q22 19.6 15.5 22.9L15.3 19.2Z" fill="#17b4be" stroke="#0a5660" stroke-width="0.9" stroke-linejoin="round" stroke-linecap="round"/><path d="M9.6 3.4L7.4 5.4M11.8 5.6L10.4 6.8M14 7.8L11.8 9.8M16.2 10L14.8 11.2M18.4 12.2L16.2 14.2" stroke="#0a5660" stroke-width="0.9"/></svg>
<svg style="left:953px;top:53px" width="5" height="18" viewBox="0 0 5 18"><rect x="0" y="0" width="1" height="1" fill="#b9babb"/><rect x="3" y="0" width="1" height="1" fill="#b9babb"/><rect x="0" y="3" width="1" height="1" fill="#b9babb"/><rect x="3" y="3" width="1" height="1" fill="#b9babb"/><rect x="0" y="6" width="1" height="1" fill="#b9babb"/><rect x="3" y="6" width="1" height="1" fill="#b9babb"/><rect x="0" y="9" width="1" height="1" fill="#b9babb"/><rect x="3" y="9" width="1" height="1" fill="#b9babb"/><rect x="0" y="12" width="1" height="1" fill="#b9babb"/><rect x="3" y="12" width="1" height="1" fill="#b9babb"/><rect x="0" y="15" width="1" height="1" fill="#b9babb"/><rect x="3" y="15" width="1" height="1" fill="#b9babb"/></svg>
<svg style="left:965px;top:49px" width="24" height="24" viewBox="0 0 24 24"><path d="M2 9.2L9.6 2L13.4 3.4V9L19.6 11.4V17L11.8 22.4L2 19Z" fill="#d6d7d8" stroke="#8f9091" stroke-width="0.9" stroke-linejoin="round" stroke-linecap="round"/><path d="M2 9.2L6.4 10.8L13.4 3.4M6.4 10.8V15L11.8 16.8L19.6 11.4M11.8 16.8V22.4M2 14.6L6.4 15M6.4 15L13.4 9" fill="none" stroke="#8f9091" stroke-width="0.8" stroke-linejoin="round" stroke-linecap="round"/><path d="M6.4 15L11.8 16.8V22.4L2 19V14.6Z" fill="#c4c5c6" stroke="none" stroke-width="1" /><path d="M2 9.2L6.4 10.8V15L2 14.6Z" fill="#bebfc0" stroke="none" stroke-width="1" /><path d="M2 9.2L9.6 2L13.4 3.4V9L19.6 11.4V17L11.8 22.4L2 19ZM2 9.2L6.4 10.8L13.4 3.4M6.4 10.8V15L11.8 16.8L19.6 11.4M11.8 16.8V22.4M6.4 15L13.4 9" fill="none" stroke="#8f9091" stroke-width="0.8" stroke-linejoin="round" stroke-linecap="round"/></svg>
<svg style="left:998px;top:49px" width="24" height="24" viewBox="0 0 24 24"><path d="M3.4 20.8V3.2H9.6L7.6 6.6H20.8V20.8Z" fill="#f6f6f7" stroke="#8b8c8d" stroke-width="1.2" stroke-linejoin="round" stroke-linecap="round"/><path d="M10 3.4H20.8V6.4H8Z" fill="#8b8c8d" stroke="#8b8c8d" stroke-width="0.6" stroke-linejoin="round" stroke-linecap="round"/></svg>
<svg style="left:1031px;top:49px" width="24" height="24" viewBox="0 0 24 24"><path d="M9 3H5.6Q2.6 3 2.6 6V18.6Q2.6 21.6 5.6 21.6H15.4Q18.4 21.6 18.4 18.6V15.6" fill="none" stroke="#858687" stroke-width="2.6" stroke-linecap="round"/><path d="M9 3H5.6Q2.6 3 2.6 6V18.6Q2.6 21.6 5.6 21.6H15.4Q18.4 21.6 18.4 18.6V15.6" fill="none" stroke="#a9aaab" stroke-width="1.2" stroke-linecap="round"/><path d="M7.6 16.4Q6.6 7.8 14.4 7.4V3.4L21.6 9.4L14.4 15.2V11.2Q9.6 11 7.6 16.4Z" fill="#aeafb0" stroke="#88898a" stroke-width="0.8" stroke-linejoin="round" stroke-linecap="round"/></svg>
<svg style="left:1064px;top:49px" width="24" height="24" viewBox="0 0 24 24"><path d="M9 3H5.6Q2.6 3 2.6 6V18.6Q2.6 21.6 5.6 21.6H14.4Q17.4 21.6 17.4 18.6V15.6" fill="none" stroke="#858687" stroke-width="2.6" stroke-linecap="round"/><path d="M9 3H5.6Q2.6 3 2.6 6V18.6Q2.6 21.6 5.6 21.6H14.4Q17.4 21.6 17.4 18.6V15.6" fill="none" stroke="#a9aaab" stroke-width="1.2" stroke-linecap="round"/><path d="M6.6 16.4Q5.6 7.8 12.4 7.4V3.4L18.6 9.4L12.4 15.2V11.2Q8.6 11 6.6 16.4Z" fill="#aeafb0" stroke="#88898a" stroke-width="0.8" stroke-linejoin="round" stroke-linecap="round"/><path d="M17 2.4L23 9.2L17.6 15.6" fill="none" stroke="#88898a" stroke-width="2.4" stroke-linejoin="round" stroke-linecap="round"/><path d="M17 2.4L23 9.2L17.6 15.6" fill="none" stroke="#b4b5b6" stroke-width="1" stroke-linejoin="round" stroke-linecap="round"/></svg>
<svg style="left:1094px;top:58.5px" width="8" height="5" viewBox="0 0 8 5"><path d="M0 0.3H8L4 4.6Z" fill="#a4a5a6"/></svg>
<svg style="left:6px;top:92px" width="5" height="18" viewBox="0 0 5 18"><rect x="0" y="0" width="1" height="1" fill="#b9babb"/><rect x="3" y="0" width="1" height="1" fill="#b9babb"/><rect x="0" y="3" width="1" height="1" fill="#b9babb"/><rect x="3" y="3" width="1" height="1" fill="#b9babb"/><rect x="0" y="6" width="1" height="1" fill="#b9babb"/><rect x="3" y="6" width="1" height="1" fill="#b9babb"/><rect x="0" y="9" width="1" height="1" fill="#b9babb"/><rect x="3" y="9" width="1" height="1" fill="#b9babb"/><rect x="0" y="12" width="1" height="1" fill="#b9babb"/><rect x="3" y="12" width="1" height="1" fill="#b9babb"/><rect x="0" y="15" width="1" height="1" fill="#b9babb"/><rect x="3" y="15" width="1" height="1" fill="#b9babb"/></svg>
<svg style="left:18px;top:88px" width="24" height="24" viewBox="0 0 24 24"><path d="M1.2 5L6.2 1.2L23.2 7.6L18.6 11.4Z" fill="#e4e5e6" stroke="#939495" stroke-width="0.8" stroke-linejoin="round" stroke-linecap="round"/><path d="M1.2 5L18.6 11.4V23L1.2 15.6Z" fill="#d0d1d2" stroke="#939495" stroke-width="0.8" stroke-linejoin="round" stroke-linecap="round"/><path d="M18.6 11.4L23.2 7.6V19L18.6 23Z" fill="#bfc0c1" stroke="#939495" stroke-width="0.8" stroke-linejoin="round" stroke-linecap="round"/><path d="M1.2 8.6L18.6 15.2L23.2 11.4M1.2 12.2L18.6 19L23.2 15.2M10 8.2V11.8M5.6 10.2V13.8M13.6 13.2V17M9 15V18.8M14.4 9.8L18.8 6" fill="none" stroke="#939495" stroke-width="0.7" stroke-linejoin="round" stroke-linecap="round"/></svg>
<svg style="left:51px;top:88px" width="24" height="24" viewBox="0 0 24 24"><path d="M5 9.6L5 21L9.4 23L13 20.6V10Z" fill="#d4d5d6" stroke="#939495" stroke-width="0.8" stroke-linejoin="round" stroke-linecap="round"/><path d="M9.4 11.4V23" fill="none" stroke="#939495" stroke-width="0.8" stroke-linejoin="round" stroke-linecap="round"/><path d="M15.4 10.4V19L18.6 20.4L22.6 18V9.6Z" fill="#d4d5d6" stroke="#939495" stroke-width="0.8" stroke-linejoin="round" stroke-linecap="round"/><path d="M18.6 11V20.4" fill="none" stroke="#939495" stroke-width="0.8" stroke-linejoin="round" stroke-linecap="round"/><path d="M1.2 3.6L18.4 1L23.2 2.2V8.2L6.2 11.6L1.2 9.4Z" fill="#dfe0e1" stroke="#939495" stroke-width="0.8" stroke-linejoin="round" stroke-linecap="round"/><path d="M1.2 3.6L6.2 5.6L23.2 2.2M6.2 5.6V11.6" fill="none" stroke="#939495" stroke-width="0.8" stroke-linejoin="round" stroke-linecap="round"/></svg>
<svg style="left:96px;top:88px" width="24" height="24" viewBox="0 0 24 24"><path d="M5.22421 12.6303L15.2242 4.63026L11.9758 0.569741L1.97579 8.56974Z" fill="#d0d1d2" stroke="#939495" stroke-width="0.8" stroke-linejoin="round" stroke-linecap="round"/><ellipse cx="3.6" cy="10.6" rx="1.95" ry="2.6" transform="rotate(-38.6598 3.6 10.6)" fill="#e6e7e8" stroke="#939495" stroke-width="0.8"/><path d="M12.2086 16.4679L24.8086 4.26789L21.1914 0.532112L8.59141 12.7321Z" fill="#d0d1d2" stroke="#939495" stroke-width="0.8" stroke-linejoin="round" stroke-linecap="round"/><ellipse cx="10.4" cy="14.6" rx="1.95" ry="2.6" transform="rotate(-44.076 10.4 14.6)" fill="#e6e7e8" stroke="#939495" stroke-width="0.8"/><path d="M19.8303 21.0242L25.4303 14.0242L21.3697 10.7758L15.7697 17.7758Z" fill="#d0d1d2" stroke="#939495" stroke-width="0.8" stroke-linejoin="round" stroke-linecap="round"/><ellipse cx="17.8" cy="19.4" rx="1.95" ry="2.6" transform="rotate(-51.3402 17.8 19.4)" fill="#e6e7e8" stroke="#939495" stroke-width="0.8"/></svg>
<svg style="left:129px;top:88px" width="24" height="24" viewBox="0 0 24 24"><path d="M1.4 1.4L8 5.6L15 4.4L21.8 6.4V23L15 19.4L8 20.4L1.4 17Z" fill="#d6d7d8" stroke="#939495" stroke-width="0.8" stroke-linejoin="round" stroke-linecap="round"/><path d="M8 5.6V20.4M15 4.4V19.4M1.4 6.6L8 10.6L15 9.4L21.8 12M1.4 11.8L8 15.6L15 14.4L21.8 17.4" fill="none" stroke="#939495" stroke-width="0.7" stroke-linejoin="round" stroke-linecap="round"/></svg>
<svg style="left:162px;top:88px" width="24" height="24" viewBox="0 0 24 24"><path d="M1.4 3.4H7.4V6.4H4.6V9H8.2V12H4.6V14.4H11V17.6H1.4ZM13.4 3.4H23.4V17.6H13.6V14.4H20.2V6.4H19V11.8H14.4V9.2H16.2V6.4H13.4Z" fill="#cfd0d1" stroke="#939495" stroke-width="0.9" stroke-linejoin="round" stroke-linecap="round"/></svg>
<svg style="left:195px;top:88px" width="24" height="24" viewBox="0 0 24 24"><path d="M3 20H21L22.6 23H1.4Z" fill="#c6c7c8" stroke="#939495" stroke-width="0.8" stroke-linejoin="round" stroke-linecap="round"/><path d="M4 20V13.6Q4.6 5.4 10.6 3L12 1L13.4 3Q19.4 5.4 20 13.6V20Z" fill="#d2d3d4" stroke="#939495" stroke-width="0.8" stroke-linejoin="round" stroke-linecap="round"/><path d="M4 13.6H20M4 17.8H20M9 13.6V18M15 13.6V18M9 13.6Q9.4 6 12 2.6Q14.6 6 15 13.6" fill="none" stroke="#939495" stroke-width="0.7" stroke-linejoin="round" stroke-linecap="round"/><circle cx="6.4" cy="15.8" r="0.9" fill="#7d7e7f"/><circle cx="12" cy="15.8" r="0.9" fill="#7d7e7f"/><circle cx="17.6" cy="15.8" r="0.9" fill="#7d7e7f"/></svg>
<svg style="left:228px;top:88px" width="24" height="24" viewBox="0 0 24 24"><path d="M1.6 15.4Q6 12.6 8 7Q10 1.4 14 1.2L23.4 4.4V11.4L11.6 22.4L1.6 18.6Z" fill="#dcddde" stroke="#939495" stroke-width="0.8" stroke-linejoin="round" stroke-linecap="round"/><path d="M1.6 15.4L11.6 19V22.4M11.6 19Q15.6 15.6 17.6 10.6Q19.6 5.6 23.4 4.4" fill="none" stroke="#939495" stroke-width="0.8" stroke-linejoin="round" stroke-linecap="round"/><path d="M11.6 19Q15.6 15.6 17.6 10.6Q19.6 5.6 23.4 4.4V11.4L11.6 22.4Z" fill="#c4c5c6" stroke="#939495" stroke-width="0.8" stroke-linejoin="round" stroke-linecap="round"/></svg>
<svg style="left:261px;top:88px" width="24" height="24" viewBox="0 0 24 24"><path d="M8.2 2.2L17 1.1L22.8 7.3L13.3 10.3Z" fill="#dcdddd" stroke="#939495" stroke-width="0.8" stroke-linejoin="round" stroke-linecap="round"/><path d="M13.3 10.3L22.8 7.3V15.4L13.3 22.7Z" fill="#c6c7c8" stroke="#939495" stroke-width="0.8" stroke-linejoin="round" stroke-linecap="round"/><path d="M8.2 2.2L13.3 10.3V22.7L0.9 20.5V9.5Z" fill="#dfe0e0" stroke="#939495" stroke-width="0.8" stroke-linejoin="round" stroke-linecap="round"/><path d="M4.4 21V12.4L8.6 13.2V21.8Z" fill="#fafafa" stroke="#939495" stroke-width="0.7" stroke-linejoin="round" stroke-linecap="round"/><path d="M4.4 21V12.4L5.8 12.8V21.2Z" fill="#b9babb" stroke="none" stroke-width="0.8" stroke-linejoin="round" stroke-linecap="round"/></svg>
<svg style="left:294px;top:88px" width="24" height="24" viewBox="0 0 24 24"><path d="M0.8 3H22.9V16.4L19.4 20H0.8Z" fill="#d3d4d5" stroke="#858687" stroke-width="0.9" stroke-linejoin="round" stroke-linecap="round"/><path d="M3.4 5.8H19.6V15.4H16.8V8.2H13.4M3.4 5.8V15.4H9.6L11 13.6H13.6M3.4 10.4H7.6" fill="none" stroke="#7a7b7c" stroke-width="1.5" stroke-linejoin="round" stroke-linecap="round"/><path d="M19.4 20V16.4H22.9Z" fill="#a8a9aa" stroke="#858687" stroke-width="0.7" stroke-linejoin="round" stroke-linecap="round"/></svg>
<svg style="left:327px;top:88px" width="24" height="24" viewBox="0 0 24 24"><path d="M2 1.2H21.8V17L16.6 22.8H2Z" fill="#fbfbfb" stroke="#cbcccd" stroke-width="0.9" /><path d="M21.8 17H16.6V22.8Z" fill="#e2e3e4" stroke="#cbcccd" stroke-width="0.7" /><path d="M5.2 8.2L12 5L18.8 8V14.6L11.8 18.4L5.2 15.4Z" fill="#b4b5b6" stroke="#939495" stroke-width="0.8" stroke-linejoin="round" stroke-linecap="round"/><path d="M5.2 8.2L12 5L18.8 8L11.8 11.2Z" fill="#cdcecf" stroke="#939495" stroke-width="0.8" stroke-linejoin="round" stroke-linecap="round"/><path d="M11.8 11.2V18.4" fill="none" stroke="#939495" stroke-width="0.8" stroke-linejoin="round" stroke-linecap="round"/></svg>
<svg style="left:360px;top:88px" width="24" height="24" viewBox="0 0 24 24"><path d="M1.2 1.2L20 5.2L23.2 6.4V23L19.6 22.6L1.2 17.6Z" fill="#c8c9ca" stroke="#939495" stroke-width="0.8" stroke-linejoin="round" stroke-linecap="round"/><path d="M20 5.2V22.6" fill="none" stroke="#939495" stroke-width="0.8" stroke-linejoin="round" stroke-linecap="round"/><path d="M3.4 4.2L9.8 5.6V10.4L3.4 9.2Z" fill="#ececed" stroke="#939495" stroke-width="0.7" stroke-linejoin="round" stroke-linecap="round"/><path d="M12 6L18 7.4V12L12 10.8Z" fill="#ececed" stroke="#939495" stroke-width="0.7" stroke-linejoin="round" stroke-linecap="round"/><path d="M3.4 11.4L9.8 12.6V17.4L3.4 15.6Z" fill="#ececed" stroke="#939495" stroke-width="0.7" stroke-linejoin="round" stroke-linecap="round"/><path d="M12 13L18 14.2V19.6L12 18Z" fill="#ececed" stroke="#939495" stroke-width="0.7" stroke-linejoin="round" stroke-linecap="round"/></svg>
<svg style="left:393px;top:88px" width="24" height="24" viewBox="0 0 24 24"><path d="M1 19.8L17.8 3.2L18.8 3L9 14.4L3 19.6Z" fill="#a9aaab" stroke="#8f9091" stroke-width="0.7" stroke-linejoin="round" stroke-linecap="round"/><path d="M8.2 14.6L18.8 3L23.4 12.4L11.6 20Z" fill="#d6d7d8" stroke="#939495" stroke-width="0.8" stroke-linejoin="round" stroke-linecap="round"/></svg>
<svg style="left:426px;top:88px" width="24" height="24" viewBox="0 0 24 24"><path d="M5.8 23V9.2A3.9 3.9 0 1 1 8.6 9.2V23Q7.2 24 5.8 23Z" fill="#d6d7d8" stroke="#939495" stroke-width="0.9" stroke-linejoin="round" stroke-linecap="round"/><path d="M15.2 23V9.2A3.9 3.9 0 1 1 18 9.2V23Q16.6 24 15.2 23Z" fill="#d6d7d8" stroke="#939495" stroke-width="0.9" stroke-linejoin="round" stroke-linecap="round"/></svg>
<svg style="left:471px;top:88px" width="24" height="24" viewBox="0 0 24 24"><path d="M12 19V23.4" stroke="#7a7b7c" stroke-width="1.8"/><circle cx="12" cy="10.6" r="9.8" fill="#e2e3e4" stroke="#909192" stroke-width="0.9"/><path d="M12.4 2V19.4L21.6 10.6Z" fill="#767778" stroke="#6a6b6c" stroke-width="0.6" /><text x="8" y="14.2" text-anchor="middle" font-family="Liberation Sans, sans-serif" font-size="10.5" fill="#8a8b8c">A</text></svg>
<svg style="left:504px;top:88px" width="24" height="24" viewBox="0 0 24 24"><path d="M2.6 6L7 2.2L21.8 3.6V17.6L17 21.6L2.6 19.6ZM2.6 6L17 7.6L21.8 3.6M17 7.6V21.6" fill="none" stroke="#8a8b8c" stroke-width="1.6" stroke-dasharray="2.2 1.6"/><circle cx="11.4" cy="12" r="5.6" fill="#cfd0d1" stroke="#8f9091" stroke-width="0.9"/><circle cx="9.8" cy="10.2" r="2.2" fill="#eeeeef"/></svg>
<svg style="left:537px;top:88px" width="24" height="24" viewBox="0 0 24 24"><path d="M9.6 4.6L15.6 2L23.4 3.6L17.4 6.4Z" fill="#e4e5e6" stroke="#939495" stroke-width="0.8" stroke-linejoin="round" stroke-linecap="round"/><path d="M9.6 4.6L17.4 6.4V9.2L9.6 7.4Z" fill="#cfd0d1" stroke="#939495" stroke-width="0.8" stroke-linejoin="round" stroke-linecap="round"/><path d="M17.4 6.4L23.4 3.6V6.2L17.4 9.2Z" fill="#bfc0c1" stroke="#939495" stroke-width="0.8" stroke-linejoin="round" stroke-linecap="round"/><path d="M5.4 9.6L9.6 7.4L17.4 9.2L13.2 11.6Z" fill="#e4e5e6" stroke="#939495" stroke-width="0.8" stroke-linejoin="round" stroke-linecap="round"/><path d="M5.4 9.6L13.2 11.6V14.6L5.4 12.6Z" fill="#cfd0d1" stroke="#939495" stroke-width="0.8" stroke-linejoin="round" stroke-linecap="round"/><path d="M13.2 11.6L17.4 9.2V12L13.2 14.6Z" fill="#bfc0c1" stroke="#939495" stroke-width="0.8" stroke-linejoin="round" stroke-linecap="round"/><path d="M1.2 15L5.4 12.6L13.2 14.6L9.2 17Z" fill="#e4e5e6" stroke="#939495" stroke-width="0.8" stroke-linejoin="round" stroke-linecap="round"/><path d="M1.2 15L9.2 17V20.8L1.2 18.6Z" fill="#cfd0d1" stroke="#939495" stroke-width="0.8" stroke-linejoin="round" stroke-linecap="round"/><path d="M9.2 17L13.2 14.6V18.2L9.2 20.8Z" fill="#bfc0c1" stroke="#939495" stroke-width="0.8" stroke-linejoin="round" stroke-linecap="round"/></svg>
<svg style="left:570px;top:88px" width="24" height="24" viewBox="0 0 24 24"><path d="M1.4 1.2L10 4.6V7.2L12.4 8V5.6L21 8.8L23 10V23L21 22.6L12.4 19.4V17L10 16.2V18.6L1.4 15.6Z" fill="#d0d1d2" stroke="#939495" stroke-width="0.9" stroke-linejoin="round" stroke-linecap="round"/><path d="M21 8.8V22.6" fill="none" stroke="#939495" stroke-width="0.8" stroke-linejoin="round" stroke-linecap="round"/></svg>
<svg style="left:615px;top:88px" width="24" height="24" viewBox="0 0 24 24"><path d="M2.6 3.4L5 1.4L10.4 2V11.4L17.6 9.8L18.8 10.6V20.4L15.8 22V15.4L11.6 16.6V23L8.6 22.4L8.2 16L5.6 15.2V21.4L2.6 20.4Z" fill="#cbcccd" stroke="#939495" stroke-width="0.9" stroke-linejoin="round" stroke-linecap="round"/><path d="M5.4 3.6V15M7.8 3V11.8M2.6 3.4L5.4 3.6L10.4 2M8.4 12.8L11.6 14L17.6 9.8M11.6 14V16.6M15.8 15.4V12" fill="none" stroke="#939495" stroke-width="0.7" stroke-linejoin="round" stroke-linecap="round"/></svg>
<svg style="left:648px;top:88px" width="24" height="24" viewBox="0 0 24 24"><path d="M1.6 23V4L4.4 1L7.2 4V23Z" fill="#d2d3d4" stroke="#939495" stroke-width="0.8" stroke-linejoin="round" stroke-linecap="round"/><path d="M4.4 4.2V23" fill="none" stroke="#939495" stroke-width="0.6" stroke-linejoin="round" stroke-linecap="round"/><path d="M9.2 23V7.2L12 4.2L14.8 7.2V23Z" fill="#d2d3d4" stroke="#939495" stroke-width="0.8" stroke-linejoin="round" stroke-linecap="round"/><path d="M12 7.4V23" fill="none" stroke="#939495" stroke-width="0.6" stroke-linejoin="round" stroke-linecap="round"/><path d="M16.8 23V10.4L19.6 7.4L22.4 10.4V23Z" fill="#d2d3d4" stroke="#939495" stroke-width="0.8" stroke-linejoin="round" stroke-linecap="round"/><path d="M19.6 10.6V23" fill="none" stroke="#939495" stroke-width="0.6" stroke-linejoin="round" stroke-linecap="round"/></svg>
<svg style="left:681px;top:88px" width="24" height="24" viewBox="0 0 24 24"><path d="M1 11.4H23.4V14H1ZM1 17H23.4V19.6H1Z" fill="#e2e3e4" stroke="#939495" stroke-width="0.7" stroke-linejoin="round" stroke-linecap="round"/><path d="M2 23V10L4 7L6 10V23Z" fill="#d0d1d2" stroke="#939495" stroke-width="0.8" stroke-linejoin="round" stroke-linecap="round"/><path d="M10 23V10L12 7L14 10V23Z" fill="#d0d1d2" stroke="#939495" stroke-width="0.8" stroke-linejoin="round" stroke-linecap="round"/><path d="M18.4 23V10L20.4 7L22.4 10V23Z" fill="#d0d1d2" stroke="#939495" stroke-width="0.8" stroke-linejoin="round" stroke-linecap="round"/></svg>
<svg style="left:714px;top:88px" width="24" height="24" viewBox="0 0 24 24"><path d="M1.4 8L23.4 1.4V4.6L1.4 11Z" fill="#cfd0d1" stroke="#939495" stroke-width="0.9" stroke-linejoin="round" stroke-linecap="round"/><path d="M1.4 19.4H23.4V22H1.4Z" fill="#cfd0d1" stroke="#939495" stroke-width="0.9" stroke-linejoin="round" stroke-linecap="round"/><path d="M5 10.4V19.4M7.6 9.6V19.4M14.6 7.2V19.4M17.2 6.4V19.4M7.8 10.2L14.4 18.6M17.4 7.4L23.2 14.4" fill="none" stroke="#8b8c8d" stroke-width="1.3" stroke-linejoin="round" stroke-linecap="round"/></svg>
<svg style="left:747px;top:88px" width="24" height="24" viewBox="0 0 24 24"><path d="M5.6 1.4H18.6Q19.8 1.4 19.8 2.6V4.4Q19.8 5.6 18.6 5.6H15Q14 5.6 14 6.6V17Q14 18 15 18H18.6Q19.8 18 19.8 19.2V21.4Q19.8 22.6 18.6 22.6H5.6Q4.4 22.6 4.4 21.4V19.2Q4.4 18 5.6 18H9.2Q10.2 18 10.2 17V6.6Q10.2 5.6 9.2 5.6H5.6Q4.4 5.6 4.4 4.4V2.6Q4.4 1.4 5.6 1.4Z" fill="#d0d1d2" stroke="#939495" stroke-width="0.9" stroke-linejoin="round" stroke-linecap="round"/></svg>
<svg style="left:780px;top:88px" width="24" height="24" viewBox="0 0 24 24"><circle cx="15.3" cy="5.8" r="5.2" fill="#d4d5d6" stroke="#939495" stroke-width="0.9"/><circle cx="13.9" cy="4.2" r="2.184" fill="#f0f0f1"/><circle cx="6.2" cy="14.4" r="5.2" fill="#d4d5d6" stroke="#939495" stroke-width="0.9"/><circle cx="4.8" cy="12.8" r="2.184" fill="#f0f0f1"/><circle cx="17.8" cy="17.8" r="5.2" fill="#d4d5d6" stroke="#939495" stroke-width="0.9"/><circle cx="16.4" cy="16.2" r="2.184" fill="#f0f0f1"/></svg>
<svg style="left:825px;top:88px" width="24" height="24" viewBox="0 0 24 24"><path d="M1.4 3H23.4V21.4H1.4Z" fill="#dcddde" stroke="#939495" stroke-width="0.9" stroke-linejoin="round" stroke-linecap="round"/><path d="M1.4 6.6H23.4M1.4 10.4H23.4M1.4 14H23.4M1.4 17.8H23.4M8 3V21.4" fill="none" stroke="#88898a" stroke-width="0.9" stroke-linejoin="round" stroke-linecap="round"/></svg>
<svg style="left:858px;top:88px" width="24" height="24" viewBox="0 0 24 24"><path d="M5.4 2.2L20 6.6Q23.6 8 23 14.6Q22.4 21 18.6 21.6L4 17.4Z" fill="#dddedf" stroke="#939495" stroke-width="0.9" stroke-linejoin="round" stroke-linecap="round"/><ellipse cx="5" cy="9.8" rx="3.8" ry="7.8" transform="rotate(-8 5 9.8)" fill="#c9cacb" stroke="#939495" stroke-width="0.9"/><ellipse cx="5" cy="9.8" rx="2" ry="4.6" transform="rotate(-8 5 9.8)" fill="#f2f2f3" stroke="#939495" stroke-width="0.8"/></svg>
<svg style="left:903px;top:88px" width="24" height="24" viewBox="0 0 24 24"><path d="M4 2L17.6 4V20.6L4 18Z" fill="#a5a6a7" stroke="#808182" stroke-width="0.8" stroke-linejoin="round" stroke-linecap="round"/><path d="M1.6 8.6L11.6 7V22.6L1.6 21Z" fill="#8b8c8d" stroke="#6f7071" stroke-width="0.8" stroke-linejoin="round" stroke-linecap="round"/><path d="M1.6 8.6L6 5.6L15.6 5L11.6 7Z" fill="#a9aaab" stroke="#6f7071" stroke-width="0.7" stroke-linejoin="round" stroke-linecap="round"/><path d="M11.6 7L15.6 5V19.6L11.6 22.6Z" fill="#7d7e7f" stroke="#6f7071" stroke-width="0.7" stroke-linejoin="round" stroke-linecap="round"/><path d="M20.6 3V18.4" stroke="#6a6b6c" stroke-width="1.6" stroke-dasharray="3 2.4"/><path d="M17.6 4.4L21 3.6M17.6 18L21 18.6" stroke="#6a6b6c" stroke-width="1.2"/></svg>
<svg style="left:936px;top:88px" width="24" height="24" viewBox="0 0 24 24"><path d="M4 2L17.6 4V20.6L4 18Z" fill="#a5a6a7" stroke="#808182" stroke-width="0.8" stroke-linejoin="round" stroke-linecap="round"/><path d="M1.6 8.6L11.6 7V22.6L1.6 21Z" fill="#8b8c8d" stroke="#6f7071" stroke-width="0.8" stroke-linejoin="round" stroke-linecap="round"/><path d="M1.6 8.6L6 5.6L15.6 5L11.6 7Z" fill="#a9aaab" stroke="#6f7071" stroke-width="0.7" stroke-linejoin="round" stroke-linecap="round"/><path d="M11.6 7L15.6 5V19.6L11.6 22.6Z" fill="#7d7e7f" stroke="#6f7071" stroke-width="0.7" stroke-linejoin="round" stroke-linecap="round"/><path d="M20.6 3V18.4" stroke="#6a6b6c" stroke-width="1.6" stroke-dasharray="2 2"/><path d="M16 4.4L21 3.6M17.6 18L21 18.6M15 21.6L19 22.4" stroke="#6a6b6c" stroke-width="1.1" stroke-dasharray="2 1.4"/></svg>
<svg style="left:969px;top:88px" width="24" height="24" viewBox="0 0 24 24"><path d="M9.4 1.4H14.8V9.2H22.8V14.6H14.8V22.6H9.4V14.6H1.2V9.2H9.4Z" fill="#a2a3a4" stroke="#8d8e8f" stroke-width="0.9" stroke-linejoin="round" stroke-linecap="round"/></svg>
<svg style="left:1002px;top:88px" width="24" height="24" viewBox="0 0 24 24"><path d="M1.2 9H23V15H1.2Z" fill="#a2a3a4" stroke="#8d8e8f" stroke-width="0.9" stroke-linejoin="round" stroke-linecap="round"/></svg>
<svg style="left:1035px;top:88px" width="24" height="24" viewBox="0 0 24 24"><path d="M2.4 15.6Q1 7 8 3Q13 0.4 18 3.4Q22.4 6.6 22.6 14.6Q24.4 16.6 23.2 19Q19 23.4 12.6 22Q5 20 2.4 15.6Z" fill="#8e8f90" stroke="#77787a" stroke-width="0.8" stroke-linejoin="round" stroke-linecap="round"/><path d="M2.6 15.4Q8 20 15 20.4Q20 20.4 22.8 15" fill="none" stroke="#6e6f70" stroke-width="0.9" stroke-linejoin="round" stroke-linecap="round"/><path d="M10.6 2Q14.6 6 16.4 11.6M13 1.6Q17 5.4 18.6 10.8M15.6 2.2Q19.4 5.6 20.6 10" fill="none" stroke="#747576" stroke-width="0.9" stroke-linejoin="round" stroke-linecap="round"/></svg>
<svg style="left:81px;top:97.5px" width="8" height="5" viewBox="0 0 8 5"><path d="M0 0.3H8L4 4.6Z" fill="#a4a5a6"/></svg>
<svg style="left:456px;top:97.5px" width="8" height="5" viewBox="0 0 8 5"><path d="M0 0.3H8L4 4.6Z" fill="#a4a5a6"/></svg>
<svg style="left:600px;top:97.5px" width="8" height="5" viewBox="0 0 8 5"><path d="M0 0.3H8L4 4.6Z" fill="#a4a5a6"/></svg>
<svg style="left:810px;top:97.5px" width="8" height="5" viewBox="0 0 8 5"><path d="M0 0.3H8L4 4.6Z" fill="#a4a5a6"/></svg>
<svg style="left:888px;top:97.5px" width="8" height="5" viewBox="0 0 8 5"><path d="M0 0.3H8L4 4.6Z" fill="#a4a5a6"/></svg>
<svg style="left:6px;top:131px" width="5" height="18" viewBox="0 0 5 18"><rect x="0" y="0" width="1" height="1" fill="#b9babb"/><rect x="3" y="0" width="1" height="1" fill="#b9babb"/><rect x="0" y="3" width="1" height="1" fill="#b9babb"/><rect x="3" y="3" width="1" height="1" fill="#b9babb"/><rect x="0" y="6" width="1" height="1" fill="#b9babb"/><rect x="3" y="6" width="1" height="1" fill="#b9babb"/><rect x="0" y="9" width="1" height="1" fill="#b9babb"/><rect x="3" y="9" width="1" height="1" fill="#b9babb"/><rect x="0" y="12" width="1" height="1" fill="#b9babb"/><rect x="3" y="12" width="1" height="1" fill="#b9babb"/><rect x="0" y="15" width="1" height="1" fill="#b9babb"/><rect x="3" y="15" width="1" height="1" fill="#b9babb"/></svg>
<div class="prs" style="left:14px;top:124px;width:32px;height:31px"></div>
<div class="prs" style="left:47px;top:124px;width:32px;height:31px"></div>
<div class="prs" style="left:80px;top:124px;width:32px;height:31px"></div>
<div class="prs" style="left:179px;top:124px;width:32px;height:31px"></div>
<div class="prs" style="left:443px;top:124px;width:32px;height:31px"></div>
<svg style="left:18px;top:127px" width="24" height="24" viewBox="0 0 24 24"><path d="M7.4 11V7.4A4.6 4.6 0 0 1 16.6 7.4V11" fill="none" stroke="#0b6f7a" stroke-width="3.6"/><path d="M7.4 11V7.4A4.6 4.6 0 0 1 16.6 7.4V11" fill="none" stroke="#36d3da" stroke-width="1.9"/><path d="M4.6 10.6H19.4Q20 10.6 20 11.2V21.4Q20 22.4 19 22.4H5Q4 22.4 4 21.4V11.2Q4 10.6 4.6 10.6Z" fill="#22b8c2" stroke="#0b6f7a" stroke-width="0.9" stroke-linejoin="round" stroke-linecap="round"/><path d="M6 14H18M6 16.8H18M6 19.6H18" stroke="#178f9a" stroke-width="1.1"/></svg>
<svg style="left:51px;top:127px" width="24" height="24" viewBox="0 0 24 24"><path d="M8 16L20.6 4.4" stroke="#0b6f7a" stroke-width="4.6"/><path d="M8.6 15.4L20 5" stroke="#2cc5cd" stroke-width="2.8"/><circle cx="6.6" cy="17.4" r="4.6" fill="#2cc5cd" stroke="#0b6f7a" stroke-width="0.9"/></svg>
<svg style="left:84px;top:127px" width="24" height="24" viewBox="0 0 24 24"><path d="M2.4 21.4L21.6 3" stroke="#0b6f7a" stroke-width="4.6"/><path d="M3 20.8L21 3.6" stroke="#2cc5cd" stroke-width="2.8"/><circle cx="12" cy="12" r="5.2" fill="#2cc5cd" stroke="#0b6f7a" stroke-width="0.9"/></svg>
<svg style="left:117px;top:127px" width="24" height="24" viewBox="0 0 24 24"><circle cx="12" cy="12" r="8.9" fill="#fbfbfb" stroke="#0b6f7a" stroke-width="4"/><circle cx="12" cy="12" r="8.9" fill="none" stroke="#2cc5cd" stroke-width="2.4"/><circle cx="12" cy="12" r="4.5" fill="#2cc5cd" stroke="#0b6f7a" stroke-width="0.8"/></svg>
<svg style="left:150px;top:127px" width="24" height="24" viewBox="0 0 24 24"><path d="M12 4.4L19.6 12L12 19.6L4.4 12Z" fill="none" stroke="#0b6f7a" stroke-width="2.2"/><path d="M12 4.4L19.6 12L12 19.6L4.4 12Z" fill="none" stroke="#2cc5cd" stroke-width="0.8"/><circle cx="12" cy="4.4" r="3.3" fill="#2cc5cd" stroke="#0b6f7a" stroke-width="0.8"/><circle cx="19.6" cy="12" r="3.3" fill="#2cc5cd" stroke="#0b6f7a" stroke-width="0.8"/><circle cx="12" cy="19.6" r="3.3" fill="#2cc5cd" stroke="#0b6f7a" stroke-width="0.8"/><circle cx="4.4" cy="12" r="3.3" fill="#2cc5cd" stroke="#0b6f7a" stroke-width="0.8"/></svg>
<svg style="left:183px;top:127px" width="24" height="24" viewBox="0 0 24 24"><path d="M4.4 1.6L12 8.6L19.6 1.6L22.6 4.8L15.2 12L22.6 19.2L19.6 22.4L12 15.4L4.4 22.4L1.4 19.2L8.8 12L1.4 4.8Z" fill="#2cc5cd" stroke="#0b6f7a" stroke-width="0.9" stroke-linejoin="round" stroke-linecap="round"/></svg>
<svg style="left:216px;top:127px" width="24" height="24" viewBox="0 0 24 24"><path d="M9.4 4H14V14.8H23.2V19.8H0.8V14.8H9.4Z" fill="#2cc5cd" stroke="#0b6f7a" stroke-width="0.9" stroke-linejoin="round" stroke-linecap="round"/></svg>
<svg style="left:249px;top:127px" width="24" height="24" viewBox="0 0 24 24"><circle cx="4.2" cy="12" r="3.1" fill="#2cc5cd" stroke="#0b6f7a" stroke-width="0.8"/><circle cx="12" cy="12" r="3.1" fill="#2cc5cd" stroke="#0b6f7a" stroke-width="0.8"/><circle cx="19.6" cy="12" r="3.1" fill="#2cc5cd" stroke="#0b6f7a" stroke-width="0.8"/></svg>
<svg style="left:282px;top:127px" width="24" height="24" viewBox="0 0 24 24"><path d="M7.6 1.6L22.4 11.4L20.4 14.4L5.6 4.6Z" fill="#2cc5cd" stroke="#0b6f7a" stroke-width="0.9" stroke-linejoin="round" stroke-linecap="round"/><path d="M3 9.2L17.8 19L15.8 22L1 12.2Z" fill="#2cc5cd" stroke="#0b6f7a" stroke-width="0.9" stroke-linejoin="round" stroke-linecap="round"/></svg>
<svg style="left:315px;top:127px" width="24" height="24" viewBox="0 0 24 24"><path d="M7.4 6.6L14.6 1.6L22.6 2.4V13.6L15.6 19.4H7.4Z" fill="#27b8c2" stroke="#0b6f7a" stroke-width="0.9" stroke-linejoin="round" stroke-linecap="round"/><path d="M7.4 6.6H15.6V19.4H7.4Z" fill="#2ecbd3" stroke="#0b6f7a" stroke-width="0.9" stroke-linejoin="round" stroke-linecap="round"/><path d="M7.4 6.6L14.6 1.6L22.6 2.4L15.6 6.6Z" fill="#4fe0e6" stroke="#0b6f7a" stroke-width="0.9" stroke-linejoin="round" stroke-linecap="round"/><circle cx="6" cy="17.8" r="4.6" fill="#2cc5cd" stroke="#0b6f7a" stroke-width="0.9"/></svg>
<svg style="left:348px;top:127px" width="24" height="24" viewBox="0 0 24 24"><path d="M3.4 7.6L19.6 18.2L17.6 21.2L1.4 10.6Z" fill="#2cc5cd" stroke="#0b6f7a" stroke-width="0.9" stroke-linejoin="round" stroke-linecap="round"/><circle cx="16" cy="5.8" r="3.7" fill="#2cc5cd" stroke="#0b6f7a" stroke-width="0.8"/></svg>
<svg style="left:381px;top:127px" width="24" height="24" viewBox="0 0 24 24"><path d="M9.8 3.6H14.2V9.8H20.4V14.2H14.2V20.4H9.8V14.2H3.6V9.8H9.8Z" fill="#2cc5cd" stroke="#0b6f7a" stroke-width="0.9" stroke-linejoin="round" stroke-linecap="round"/></svg>
<svg style="left:414px;top:127px" width="24" height="24" viewBox="0 0 24 24"><path fill-rule="evenodd" d="M6.2 1.6H9.2V6H15V1.6H18V6H22.4V9H18V15H22.4V18H18V22.6H15V18H9.2V22.6H6.2V18H1.8V15H6.2V9H1.8V6H6.2ZM9.2 9V15H15V9Z" fill="#2cc5cd" stroke="#0b6f7a" stroke-width="0.8" stroke-linejoin="round" stroke-linecap="round"/></svg>
<svg style="left:447px;top:127px" width="24" height="24" viewBox="0 0 24 24"><path d="M1.2 1H23V22.8H1.2Z" fill="#25c4cc" stroke="#0b6f7a" stroke-width="1" stroke-linejoin="round" stroke-linecap="round"/><circle cx="8.2" cy="15" r="3.4" fill="#2fd0d6" stroke="#0b6f7a" stroke-width="0.9"/></svg>
<svg style="left:480px;top:127px" width="24" height="24" viewBox="0 0 24 24"><path d="M8.6 9.4H21.4M9.8 9V20.4M7.6 19.6H14" fill="none" stroke="#19ccd5" stroke-width="2.3"/><path d="M20.6 9.4V13.4" stroke="#15a5ae" stroke-width="1.8"/><text x="8" y="6.6" textLength="14" lengthAdjust="spacingAndGlyphs" font-family="DejaVu Sans, sans-serif" font-weight="bold" font-size="7.6" fill="#0b4f58">1.00</text><text transform="translate(6.8 20.8) rotate(-90)" textLength="13.4" lengthAdjust="spacingAndGlyphs" font-family="DejaVu Sans, sans-serif" font-weight="bold" font-size="7.6" fill="#0b4f58">1.00</text></svg>
<svg style="left:513px;top:127px" width="24" height="24" viewBox="0 0 24 24"><path d="M5.6 1.6V23M12 1.6V23M18.6 1.6V23M1.6 5H23M1.6 11.9H23M1.6 18.5H23" fill="none" stroke="#5a5b5c" stroke-width="3.4" stroke-linecap="round"/><path d="M5.6 1.6V23M12 1.6V23M18.6 1.6V23M1.6 5H23M1.6 11.9H23M1.6 18.5H23" fill="none" stroke="#f8f8f8" stroke-width="1.9" stroke-linecap="round"/><path d="M7.4 6.8H10.2V10H7.4ZM13.8 6.8H16.8V10H13.8ZM7.4 13.8H10.2V16.8H7.4ZM13.8 13.8H16.8V16.8H13.8Z" fill="#f4f4f5" stroke="#6a6b6c" stroke-width="0.7"/></svg>
<svg style="left:550px;top:131px" width="5" height="18" viewBox="0 0 5 18"><rect x="0" y="0" width="1" height="1" fill="#b9babb"/><rect x="3" y="0" width="1" height="1" fill="#b9babb"/><rect x="0" y="3" width="1" height="1" fill="#b9babb"/><rect x="3" y="3" width="1" height="1" fill="#b9babb"/><rect x="0" y="6" width="1" height="1" fill="#b9babb"/><rect x="3" y="6" width="1" height="1" fill="#b9babb"/><rect x="0" y="9" width="1" height="1" fill="#b9babb"/><rect x="3" y="9" width="1" height="1" fill="#b9babb"/><rect x="0" y="12" width="1" height="1" fill="#b9babb"/><rect x="3" y="12" width="1" height="1" fill="#b9babb"/><rect x="0" y="15" width="1" height="1" fill="#b9babb"/><rect x="3" y="15" width="1" height="1" fill="#b9babb"/></svg>
<svg style="left:561px;top:127px" width="24" height="24" viewBox="0 0 24 24"><path d="M5.2 19.4L20.6 4.2" fill="none" stroke="#8f9091" stroke-width="2.4" stroke-linejoin="round" stroke-linecap="round"/><path d="M5.2 19.4L20.6 4.2" fill="none" stroke="#f4f4f5" stroke-width="0.9" stroke-linejoin="round" stroke-linecap="round"/><circle cx="20.6" cy="4.2" r="3.1" fill="#d0d1d2" stroke="#9a9b9c" stroke-width="0.9"/><circle cx="5.2" cy="19.4" r="3.1" fill="#d0d1d2" stroke="#9a9b9c" stroke-width="0.9"/></svg>
<svg style="left:594px;top:127px" width="24" height="24" viewBox="0 0 24 24"><path d="M5.2 19.4L9.2 8.8L15.4 19.4L20.6 4.2" fill="none" stroke="#8f9091" stroke-width="2.4" stroke-linejoin="round" stroke-linecap="round"/><path d="M5.2 19.4L9.2 8.8L15.4 19.4L20.6 4.2" fill="none" stroke="#f4f4f5" stroke-width="0.9" stroke-linejoin="round" stroke-linecap="round"/><circle cx="9.2" cy="8.8" r="3.1" fill="#d0d1d2" stroke="#9a9b9c" stroke-width="0.9"/><circle cx="20.6" cy="4.2" r="3.1" fill="#d0d1d2" stroke="#9a9b9c" stroke-width="0.9"/><circle cx="5.2" cy="19.4" r="3.1" fill="#d0d1d2" stroke="#9a9b9c" stroke-width="0.9"/><circle cx="15.4" cy="19.4" r="3.1" fill="#d0d1d2" stroke="#9a9b9c" stroke-width="0.9"/></svg>
<svg style="left:627px;top:127px" width="24" height="24" viewBox="0 0 24 24"><path d="M5.6 1.2V8.4Q6 17 15.6 19H23.4" fill="none" stroke="#8f9091" stroke-width="2.2" stroke-linejoin="round" stroke-linecap="round"/><path d="M5.6 1.2V8.4Q6 17 15.6 19H23.4" fill="none" stroke="#f4f4f5" stroke-width="0.7" stroke-linejoin="round" stroke-linecap="round"/><circle cx="5.6" cy="8.4" r="3.1" fill="#d0d1d2" stroke="#9a9b9c" stroke-width="0.9"/><circle cx="15.6" cy="19" r="3.1" fill="#d0d1d2" stroke="#9a9b9c" stroke-width="0.9"/><path d="M5.2 15V23M1.4 19H9" stroke="#707172" stroke-width="1" stroke-dasharray="1.6 1"/></svg>
<svg style="left:660px;top:127px" width="24" height="24" viewBox="0 0 24 24"><path d="M5.2 4.4Q18 6 19.6 18.6" fill="none" stroke="#8f9091" stroke-width="2.2" stroke-linejoin="round" stroke-linecap="round"/><path d="M5.2 4.4Q18 6 19.6 18.6" fill="none" stroke="#f4f4f5" stroke-width="0.7" stroke-linejoin="round" stroke-linecap="round"/><circle cx="5.2" cy="4.4" r="3.1" fill="#d0d1d2" stroke="#9a9b9c" stroke-width="0.9"/><circle cx="19.6" cy="18.8" r="3.1" fill="#d0d1d2" stroke="#9a9b9c" stroke-width="0.9"/><circle cx="5.2" cy="18.8" r="3.1" fill="#d0d1d2" stroke="#9a9b9c" stroke-width="0.9"/></svg>
<svg style="left:705px;top:127px" width="24" height="24" viewBox="0 0 24 24"><circle cx="12.2" cy="12" r="9.6" fill="none" stroke="#8f9091" stroke-width="2.6"/><circle cx="12.2" cy="12" r="9.6" fill="none" stroke="#f4f4f5" stroke-width="1.1"/><circle cx="12.2" cy="12" r="3.3" fill="#d0d1d2" stroke="#9a9b9c" stroke-width="0.9"/><circle cx="20.6" cy="12" r="3.3" fill="#d0d1d2" stroke="#9a9b9c" stroke-width="0.9"/></svg>
<svg style="left:738px;top:127px" width="24" height="24" viewBox="0 0 24 24"><ellipse cx="12" cy="12" rx="10.6" ry="4.6" fill="none" stroke="#8f9091" stroke-width="2.4" transform="rotate(-4 12 12)"/><ellipse cx="12" cy="12" rx="10.6" ry="4.6" fill="none" stroke="#f4f4f5" stroke-width="1" transform="rotate(-4 12 12)"/><circle cx="19.4" cy="4.2" r="3.1" fill="#d0d1d2" stroke="#9a9b9c" stroke-width="0.9"/><circle cx="4.6" cy="19.4" r="3.1" fill="#d0d1d2" stroke="#9a9b9c" stroke-width="0.9"/></svg>
<svg style="left:771px;top:127px" width="24" height="24" viewBox="0 0 24 24"><path d="M5 4.2H21V19.4H5Z" fill="none" stroke="#8f9091" stroke-width="2.6" stroke-linejoin="round" stroke-linecap="round"/><path d="M5 4.2H21V19.4H5Z" fill="none" stroke="#f4f4f5" stroke-width="1.1" stroke-linejoin="round" stroke-linecap="round"/><circle cx="21" cy="4.2" r="3.1" fill="#d0d1d2" stroke="#9a9b9c" stroke-width="0.9"/><circle cx="5" cy="19.4" r="3.1" fill="#d0d1d2" stroke="#9a9b9c" stroke-width="0.9"/></svg>
<svg style="left:804px;top:127px" width="24" height="24" viewBox="0 0 24 24"><path d="M12.8 1.6L22.4 9.2L17 20.6L4.6 19.4L2 7.4Z" fill="none" stroke="#8f9091" stroke-width="2.4" stroke-linejoin="round" stroke-linecap="round"/><path d="M12.8 1.6L22.4 9.2L17 20.6L4.6 19.4L2 7.4Z" fill="none" stroke="#f4f4f5" stroke-width="0.9" stroke-linejoin="round" stroke-linecap="round"/><circle cx="12" cy="12.4" r="3.3" fill="#d0d1d2" stroke="#9a9b9c" stroke-width="0.9"/><circle cx="20.6" cy="10.2" r="3.3" fill="#d0d1d2" stroke="#9a9b9c" stroke-width="0.9"/></svg>
<svg style="left:837px;top:127px" width="24" height="24" viewBox="0 0 24 24"><path d="M4.2 15.6Q5 5 12 4.6Q18 6 18.8 17.8" fill="none" stroke="#8f9091" stroke-width="2.4" stroke-linejoin="round" stroke-linecap="round"/><path d="M4.2 15.6Q5 5 12 4.6Q18 6 18.8 17.8" fill="none" stroke="#f4f4f5" stroke-width="0.9" stroke-linejoin="round" stroke-linecap="round"/><circle cx="12" cy="4.6" r="3.1" fill="#d0d1d2" stroke="#9a9b9c" stroke-width="0.9"/><circle cx="4.2" cy="15.6" r="3.1" fill="#d0d1d2" stroke="#9a9b9c" stroke-width="0.9"/><circle cx="18.8" cy="17.8" r="3.1" fill="#d0d1d2" stroke="#9a9b9c" stroke-width="0.9"/></svg>
<svg style="left:870px;top:127px" width="24" height="24" viewBox="0 0 24 24"><path d="M4.6 4V18M19.8 4V18" fill="none" stroke="#8f9091" stroke-width="1.8" stroke-linejoin="round" stroke-linecap="round"/><path d="M4.6 4V18M19.8 4V18" fill="none" stroke="#f4f4f5" stroke-width="0.3" stroke-linejoin="round" stroke-linecap="round"/><path d="M4.6 19Q5 9 12.2 8.6Q19.4 9 19.8 19" fill="none" stroke="#8f9091" stroke-width="2.2" stroke-linejoin="round" stroke-linecap="round"/><path d="M4.6 19Q5 9 12.2 8.6Q19.4 9 19.8 19" fill="none" stroke="#f4f4f5" stroke-width="0.7" stroke-linejoin="round" stroke-linecap="round"/><rect x="2.8" y="1.2" width="3.6" height="3.6" fill="#e4e5e6" stroke="#8c8d8e" stroke-width="0.9"/><rect x="18" y="1.2" width="3.6" height="3.6" fill="#e4e5e6" stroke="#8c8d8e" stroke-width="0.9"/><circle cx="4.6" cy="19.4" r="3.1" fill="#d0d1d2" stroke="#9a9b9c" stroke-width="0.9"/><circle cx="19.8" cy="19.4" r="3.1" fill="#d0d1d2" stroke="#9a9b9c" stroke-width="0.9"/><text x="12.2" y="19.6" text-anchor="middle" font-family="Liberation Sans, sans-serif" font-weight="bold" font-size="8" fill="#8a8b8c">3</text></svg>
<svg style="left:915px;top:127px" width="24" height="24" viewBox="0 0 24 24"><circle cx="12" cy="12.1" r="3.6" fill="#cfd0d1" stroke="#9a9b9c" stroke-width="0.9"/></svg>
<svg style="left:948px;top:127px" width="24" height="24" viewBox="0 0 24 24"><path d="M1.4 8.6L13.6 1.6L23.2 1.8L23 6.4L14 8V10.6L23 9V14.4L14 17.6L13.6 23L1.4 22.6Z" fill="#d2d3d4" stroke="#939495" stroke-width="0.9" stroke-linejoin="round" stroke-linecap="round"/><path d="M13.6 1.6L23.2 1.8L23 6.4L14 8ZM14 10.6L23 9V14.4L14 17.6Z" fill="#e6e7e8" stroke="#939495" stroke-width="0.7" stroke-linejoin="round" stroke-linecap="round"/></svg>
<svg style="left:981px;top:127px" width="24" height="24" viewBox="0 0 24 24"><text transform="translate(12.4 21.6) scale(1.32 1)" text-anchor="middle" font-family="Liberation Serif, serif" font-style="italic" font-size="31" fill="#f1f1f2" stroke="#8a8b8c" stroke-width="0.8">S</text></svg>
<svg style="left:1014px;top:127px" width="24" height="24" viewBox="0 0 24 24"><defs><pattern id="hp" width="5.8" height="5.8" patternUnits="userSpaceOnUse" patternTransform="rotate(50)"><rect width="5.8" height="2.9" fill="#2c2c2c"/><rect y="2.9" width="5.8" height="2.9" fill="#fafafa"/></pattern></defs><path d="M13.4 1H21.6Q23 1 23 2.4V21.4Q23 22.8 21.6 22.8H2.4Q1 22.8 1 21.4V13.6Q1 12.2 2.4 12.2H12V2.4Q12 1 13.4 1Z" fill="#b4b5b6" stroke="#8f9091" stroke-width="0.9"/><path d="M14 3H21V20.8H3V14.2H14Z" fill="url(#hp)"/></svg>
<svg style="left:691px;top:136.5px" width="8" height="5" viewBox="0 0 8 5"><path d="M0 0.3H8L4 4.6Z" fill="#a4a5a6"/></svg>
<svg style="left:901px;top:136.5px" width="8" height="5" viewBox="0 0 8 5"><path d="M0 0.3H8L4 4.6Z" fill="#a4a5a6"/></svg>
<svg style="left:1052px;top:131px" width="5" height="18" viewBox="0 0 5 18"><rect x="0" y="0" width="1" height="1" fill="#b9babb"/><rect x="3" y="0" width="1" height="1" fill="#b9babb"/><rect x="0" y="3" width="1" height="1" fill="#b9babb"/><rect x="3" y="3" width="1" height="1" fill="#b9babb"/><rect x="0" y="6" width="1" height="1" fill="#b9babb"/><rect x="3" y="6" width="1" height="1" fill="#b9babb"/><rect x="0" y="9" width="1" height="1" fill="#b9babb"/><rect x="3" y="9" width="1" height="1" fill="#b9babb"/><rect x="0" y="12" width="1" height="1" fill="#b9babb"/><rect x="3" y="12" width="1" height="1" fill="#b9babb"/><rect x="0" y="15" width="1" height="1" fill="#b9babb"/><rect x="3" y="15" width="1" height="1" fill="#b9babb"/></svg>
<svg style="left:1064px;top:127px" width="24" height="24" viewBox="0 0 24 24"><text transform="translate(11.4 20.4) scale(1.18 1)" text-anchor="middle" font-family="Liberation Sans, sans-serif" font-style="italic" font-weight="bold" font-size="24" fill="#e9e9ea" stroke="#858687" stroke-width="0.85">A</text></svg>
<svg style="left:1097px;top:127px" width="24" height="24" viewBox="0 0 24 24"><path d="M4.4 12V21M19.6 12V21M4.4 11.4H19.6" fill="none" stroke="#8f9091" stroke-width="2" stroke-linejoin="round" stroke-linecap="round"/><path d="M4.4 12V21M19.6 12V21M4.4 11.4H19.6" fill="none" stroke="#f4f4f5" stroke-width="0.5" stroke-linejoin="round" stroke-linecap="round"/><circle cx="4.4" cy="11.4" r="1.9" fill="#e0e1e2" stroke="#8a8b8c" stroke-width="0.8"/><circle cx="19.6" cy="11.4" r="1.9" fill="#e0e1e2" stroke="#8a8b8c" stroke-width="0.8"/><circle cx="12" cy="11.4" r="2" fill="#e0e1e2" stroke="#8a8b8c" stroke-width="0.8"/><circle cx="4.4" cy="21" r="2.2" fill="#e0e1e2" stroke="#8a8b8c" stroke-width="0.8"/><circle cx="19.6" cy="21" r="2.2" fill="#e0e1e2" stroke="#8a8b8c" stroke-width="0.8"/><text x="12" y="7.4" text-anchor="middle" font-family="DejaVu Sans, sans-serif" font-weight="bold" font-size="7.4" fill="#f0f0f0" stroke="#77787a" stroke-width="0.6">1.00</text></svg>
<svg style="left:1130px;top:127px" width="24" height="24" viewBox="0 0 24 24"><path d="M1.6 3.4H13.4L17.6 7.6V9.4L15.6 12H1.6Z" fill="#f1f1f2" stroke="#77787a" stroke-width="1.2" stroke-linejoin="round" stroke-linecap="round"/><path d="M4 6.4H11M4 9H12.4" stroke="#77787a" stroke-width="1.2"/><path d="M16.4 9.6Q20.6 10 20.6 14V16.6" fill="none" stroke="#77787a" stroke-width="1.3"/><circle cx="20.6" cy="19.4" r="2.5" fill="#f1f1f2" stroke="#6c6d6e" stroke-width="1.3"/></svg>
<svg style="left:1163px;top:127px" width="24" height="24" viewBox="0 0 24 24"><text transform="translate(9.8 20.4) scale(1.12 1)" text-anchor="middle" font-family="Liberation Sans, sans-serif" font-style="italic" font-weight="bold" font-size="23" fill="#e9e9ea" stroke="#858687" stroke-width="0.85">A</text><path d="M19.4 2.4L23 5.6L14.6 15.6L10.6 17.4L11.8 13Z" fill="#98999a" stroke="#77787a" stroke-width="0.8" stroke-linejoin="round" stroke-linecap="round"/><path d="M18 4L21.6 7.2M16.6 5.8L20 8.8" stroke="#707172" stroke-width="0.6"/></svg>
<svg style="left:1200px;top:131px" width="5" height="18" viewBox="0 0 5 18"><rect x="0" y="0" width="1" height="1" fill="#b9babb"/><rect x="3" y="0" width="1" height="1" fill="#b9babb"/><rect x="0" y="3" width="1" height="1" fill="#b9babb"/><rect x="3" y="3" width="1" height="1" fill="#b9babb"/><rect x="0" y="6" width="1" height="1" fill="#b9babb"/><rect x="3" y="6" width="1" height="1" fill="#b9babb"/><rect x="0" y="9" width="1" height="1" fill="#b9babb"/><rect x="3" y="9" width="1" height="1" fill="#b9babb"/><rect x="0" y="12" width="1" height="1" fill="#b9babb"/><rect x="3" y="12" width="1" height="1" fill="#b9babb"/><rect x="0" y="15" width="1" height="1" fill="#b9babb"/><rect x="3" y="15" width="1" height="1" fill="#b9babb"/></svg>
<svg style="left:1212px;top:127px" width="24" height="24" viewBox="0 0 24 24"><path d="M7.6 2.4L15 15.6M16.4 2.4L9 15.6" stroke="#68696a" stroke-width="1.3" fill="none"/><circle cx="7" cy="18.4" r="2.7" fill="#f4f4f5" stroke="#68696a" stroke-width="1.2"/><circle cx="17" cy="18.4" r="2.7" fill="#f4f4f5" stroke="#68696a" stroke-width="1.2"/></svg>
<svg style="left:1244px;top:127px" width="24" height="24" viewBox="0 0 24 24"><path d="M4.4 2.6H11.4L14.6 6V17.4H4.4Z" fill="#d4d5d6" stroke="#707172" stroke-width="1.2" stroke-linejoin="round" stroke-linecap="round"/><path d="M9.4 7H16L19.6 10.8V21.6H9.4Z" fill="#f7f7f8" stroke="#707172" stroke-width="1.2" stroke-linejoin="round" stroke-linecap="round"/><path d="M16 7V10.8H19.6" fill="none" stroke="#707172" stroke-width="1" /></svg>
<span class="t" style="left:1292px;top:131px;font-size:12px;color:#55585a">»</span>
<svg style="left:1310px;top:131px" width="5" height="18" viewBox="0 0 5 18"><rect x="0" y="0" width="1" height="1" fill="#b9babb"/><rect x="3" y="0" width="1" height="1" fill="#b9babb"/><rect x="0" y="3" width="1" height="1" fill="#b9babb"/><rect x="3" y="3" width="1" height="1" fill="#b9babb"/><rect x="0" y="6" width="1" height="1" fill="#b9babb"/><rect x="3" y="6" width="1" height="1" fill="#b9babb"/><rect x="0" y="9" width="1" height="1" fill="#b9babb"/><rect x="3" y="9" width="1" height="1" fill="#b9babb"/><rect x="0" y="12" width="1" height="1" fill="#b9babb"/><rect x="3" y="12" width="1" height="1" fill="#b9babb"/><rect x="0" y="15" width="1" height="1" fill="#b9babb"/><rect x="3" y="15" width="1" height="1" fill="#b9babb"/></svg>
<div style="left:1325px;top:130px;width:18px;height:18px;border-radius:9px;background:#da4453"></div>
<span class="t" style="left:1355px;top:131px;font-size:12px;color:#55585a">»</span>
<span class="t" style="left:5px;top:162px">Combo View</span>
<svg style="left:476px;top:163px" width="11" height="11" viewBox="0 0 11 11"><rect x="0.6" y="0.6" width="9.8" height="9.8" rx="2" fill="none" stroke="#6c6864" stroke-width="1.1"/><rect x="4.2" y="2.4" width="4.2" height="4.2" rx="1" fill="none" stroke="#6c6864" stroke-width="1"/><rect x="2.5" y="4.3" width="4.2" height="4.2" rx="1" fill="#f4f4f4" stroke="#6c6864" stroke-width="1"/></svg>
<div style="left:2px;top:181px;width:60px;height:24px;border:1px solid #bcbdbe;border-bottom:none;border-radius:3px 3px 0 0;background:linear-gradient(#efeff0,#e3e3e4)"></div>
<span class="t" style="left:13px;top:187px">Model</span>
<div class="ln" style="left:2px;width:487px;top:204px;background:#a9aaab"></div>
<div style="left:61px;top:178px;width:77px;height:27px;border:1px solid #bcbdbe;border-bottom:none;border-radius:3px 3px 0 0;background:#fcfcfc"></div>
<svg style="left:73px;top:183px" width="16" height="16" viewBox="0 0 24 24"><path d="M1.6 6L7 1.2L19.4 14.6L14.4 19.2Z" fill="#234f8c" stroke="#16365f" stroke-width="0.8" stroke-linejoin="round" stroke-linecap="round"/><path d="M4.6 4L17 17.2" stroke="#4f82c4" stroke-width="1.6"/><path d="M19.4 14.6L22.6 22L14.4 19.2Z" fill="#f4f4f4" stroke="#8a8b8c" stroke-width="0.6" stroke-linejoin="round" stroke-linecap="round"/><path d="M20.8 19L23 22.8L19 21Z" fill="#1a1a1a" stroke="none" stroke-width="1" /></svg>
<span class="t" style="left:93px;top:186px">Tasks</span>
<div style="left:488px;top:204px;width:1px;height:457px;background:#a9aaab"></div>
<div style="left:2px;top:205px;width:486px;height:456px;background:#f4f5f5"></div>
<div style="left:3px;top:206px;width:485px;height:455px;border:1px solid #b2b3b4;border-right-color:#f6f6f6;border-bottom:none;background:linear-gradient(#fefefe 0,#787a7a 150px,#787a7a 100%)"></div>
<div class="btn" style="left:205px;top:224px;width:80px;height:24px"></div>
<svg style="left:219.8px;top:229.8px" width="12" height="12" viewBox="0 0 24 24"><circle cx="12" cy="12" r="11.8" fill="#da4453"/><path d="M7.2 7.2L16.8 16.8M16.8 7.2L7.2 16.8" stroke="#fdfdfd" stroke-width="1.9" stroke-linecap="round"/></svg>
<span class="t" style="left:236px;top:230px">Close</span>
<div style="left:12px;top:265px;width:466px;height:25px;border-radius:4px 4px 0 0;background:#fdfeff"></div>
<div style="left:13px;top:266px;width:464px;height:23px;border-radius:3px 3px 0 0;background:linear-gradient(90deg,#46b0ea 0,#9ddcfc 100%)"></div>
<svg style="left:17px;top:268px" width="18" height="18" viewBox="0 0 24 24"><path d="M6 6.4H19V19.6H6Z" fill="none" stroke="#8c8c8c" stroke-width="1.9"/><circle cx="19" cy="6" r="3.3" fill="#f2d21e" stroke="#a48a10" stroke-width="0.9"/><circle cx="5.6" cy="20" r="3.3" fill="#f2d21e" stroke="#a48a10" stroke-width="0.9"/></svg>
<span class="t" style="left:35px;top:271px;color:#fff;font-weight:bold;font-size:12.3px">Rectangle</span>
<svg style="left:460px;top:271px" width="14" height="14" viewBox="0 0 14 14"><circle cx="7" cy="7" r="6.8" fill="#eef6fb"/><path d="M4.2 6.4L7 3.6L9.8 6.4M4.2 10L7 7.2L9.8 10" fill="none" stroke="#2a9fe6" stroke-width="1.3"/></svg>
<div style="left:12px;top:290px;width:466px;height:298px;background:#eff0f1"></div>
<span class="t" style="left:27px;top:310px">Local ΔX</span>
<div class="inp" style="top:304px;border-color:#3daee9"></div>
<div style="left:87px;top:309px;width:42px;height:15px;background:#3daee9"></div>
<span class="t" style="left:87px;top:310px"><span style="position:static;color:#fff">5310.0</span> mm</span>
<svg style="left:442.3px;top:308.2px" width="20" height="20" viewBox="0 0 24 24"><defs><linearGradient id="okg" x1="0" y1="0" x2="0" y2="1"><stop offset="0" stop-color="#7cc33a"/><stop offset="1" stop-color="#3c8c12"/></linearGradient></defs><circle cx="12" cy="12" r="10.3" fill="url(#okg)" stroke="#8aa07a" stroke-width="0.9"/><path d="M5.4 12.6L10 17.2L19 7.8" fill="none" stroke="#6e8a5c" stroke-width="4.4" opacity="0.6"/><path d="M5.6 12.2L10 16.6L18.8 7.4" fill="none" stroke="#f3f3f0" stroke-width="3.1"/></svg>
<span class="t" style="left:27px;top:343px">Local ΔY</span>
<div class="inp" style="top:337px"></div>
<span class="t" style="left:87px;top:343px">-3610.0 mm</span>
<svg style="left:442.3px;top:341.2px" width="20" height="20" viewBox="0 0 24 24"><defs><linearGradient id="okg" x1="0" y1="0" x2="0" y2="1"><stop offset="0" stop-color="#7cc33a"/><stop offset="1" stop-color="#3c8c12"/></linearGradient></defs><circle cx="12" cy="12" r="10.3" fill="url(#okg)" stroke="#8aa07a" stroke-width="0.9"/><path d="M5.4 12.6L10 17.2L19 7.8" fill="none" stroke="#6e8a5c" stroke-width="4.4" opacity="0.6"/><path d="M5.6 12.2L10 16.6L18.8 7.4" fill="none" stroke="#f3f3f0" stroke-width="3.1"/></svg>
<span class="t" style="left:27px;top:376px">Local ΔZ</span>
<div class="inp" style="top:370px"></div>
<span class="t" style="left:87px;top:376px">0.0 mm</span>
<svg style="left:442.3px;top:374.2px" width="20" height="20" viewBox="0 0 24 24"><defs><linearGradient id="okg" x1="0" y1="0" x2="0" y2="1"><stop offset="0" stop-color="#7cc33a"/><stop offset="1" stop-color="#3c8c12"/></linearGradient></defs><circle cx="12" cy="12" r="10.3" fill="url(#okg)" stroke="#8aa07a" stroke-width="0.9"/><path d="M5.4 12.6L10 17.2L19 7.8" fill="none" stroke="#6e8a5c" stroke-width="4.4" opacity="0.6"/><path d="M5.6 12.2L10 16.6L18.8 7.4" fill="none" stroke="#f3f3f0" stroke-width="3.1"/></svg>
<div class="btn" style="left:26px;top:402px;width:438px;height:24px"></div>
<svg style="left:201px;top:406px" width="16" height="16" viewBox="0 0 24 24"><path d="M10.2 0.8H13.8Q14.6 0.8 14.6 1.6V4.2H17.2Q18 4.2 18 5V8.2Q18 9 17.2 9H14.6V11.6Q14.6 12.4 13.8 12.4H10.2Q9.4 12.4 9.4 11.6V9H6.8Q6 9 6 8.2V5Q6 4.2 6.8 4.2H9.4V1.6Q9.4 0.8 10.2 0.8Z" fill="#3d7cc4" stroke="#2f66a6" stroke-width="0.6" /><rect x="0.6" y="17.4" width="22.8" height="3.2" rx="1.6" fill="#dcdddd" stroke="#9a9b9c" stroke-width="0.9"/><circle cx="12" cy="19" r="3.8" fill="#3d7cc4" stroke="#2f66a6" stroke-width="0.6"/></svg>
<span class="t" style="left:220px;top:408px">Enter point</span>
<div class="cb" style="top:435px"></div>
<svg style="left:28px;top:437px" width="10" height="10" viewBox="0 0 10 10"><path d="M1.4 5.2L3.8 8L8.4 1.6" fill="none" stroke="#18191a" stroke-width="1.9"/></svg>
<span class="t" style="left:46px;top:436px">Relative (R)</span>
<div class="cb" style="top:462px"></div>
<span class="t" style="left:46px;top:463px">Global (G)</span>
<div class="cb" style="top:489px"></div>
<span class="t" style="left:46px;top:490px">Filled (L)</span>
<div class="cb" style="top:516px"></div>
<span class="t" style="left:46px;top:517px">Continue (T)</span>
<svg style="left:492px;top:419px" width="2" height="18" viewBox="0 0 2 18"><rect x="0" y="0" width="1.2" height="1.2" fill="#b4b5b6"/><rect x="0" y="3" width="1.2" height="1.2" fill="#b4b5b6"/><rect x="0" y="6" width="1.2" height="1.2" fill="#b4b5b6"/><rect x="0" y="9" width="1.2" height="1.2" fill="#b4b5b6"/><rect x="0" y="12" width="1.2" height="1.2" fill="#b4b5b6"/><rect x="0" y="15" width="1.2" height="1.2" fill="#b4b5b6"/></svg>
<svg style="left:495px;top:158px" width="871" height="503" viewBox="495 158 871 503" shape-rendering="crispEdges">
<rect x="495" y="158" width="871" height="503" fill="#ebe5e5"/>
<rect x="495" y="158" width="871" height="1" fill="#f1eeee"/>
<rect x="495" y="385" width="871" height="1" fill="#eee9e9"/>
<defs><linearGradient id="wg" x1="0" y1="0" x2="0" y2="1"><stop offset="0" stop-color="#ffffff"/><stop offset="1" stop-color="#bdbdbd"/></linearGradient><linearGradient id="wh" x1="0" y1="0" x2="1" y2="0"><stop offset="0" stop-color="#c4c4c4"/><stop offset="0.6" stop-color="#ffffff"/><stop offset="1" stop-color="#f4f4f4"/></linearGradient></defs>
<rect x="495" y="236" width="871" height="1.1" fill="#141414"/>
<rect x="495" y="237.1" width="871" height="2.9" fill="url(#wg)"/>
<rect x="495" y="240" width="871" height="1.8" fill="#0c0c0c"/>
<rect x="565.1" y="240" width="10.7" height="12.9" fill="#f4f4f4"/>
<rect x="567.1" y="237.1" width="6.4" height="14.6" fill="url(#wh)"/>
<rect x="565.1" y="240" width="2" height="12.9" fill="#0c0c0c"/>
<rect x="573.6" y="240" width="2.2" height="12.9" fill="#0c0c0c"/>
<rect x="569.5" y="236.5" width="1.3" height="15.6" fill="#161616"/>
<rect x="565.1" y="251.6" width="10.7" height="1.3" fill="#1a1a1a"/>
<rect x="659.3" y="240" width="10.7" height="12.9" fill="#f4f4f4"/>
<rect x="661.3" y="237.1" width="6.4" height="14.6" fill="url(#wh)"/>
<rect x="659.3" y="240" width="2" height="12.9" fill="#0c0c0c"/>
<rect x="667.8" y="240" width="2.2" height="12.9" fill="#0c0c0c"/>
<rect x="663.7" y="236.5" width="1.3" height="15.6" fill="#161616"/>
<rect x="659.3" y="251.6" width="10.7" height="1.3" fill="#1a1a1a"/>
<rect x="753.5" y="240" width="10.7" height="12.9" fill="#f4f4f4"/>
<rect x="755.5" y="237.1" width="6.4" height="14.6" fill="url(#wh)"/>
<rect x="753.5" y="240" width="2" height="12.9" fill="#0c0c0c"/>
<rect x="762" y="240" width="2.2" height="12.9" fill="#0c0c0c"/>
<rect x="757.9" y="236.5" width="1.3" height="15.6" fill="#161616"/>
<rect x="753.5" y="251.6" width="10.7" height="1.3" fill="#1a1a1a"/>
<rect x="847.7" y="240" width="10.7" height="12.9" fill="#f4f4f4"/>
<rect x="849.7" y="237.1" width="6.4" height="14.6" fill="url(#wh)"/>
<rect x="847.7" y="240" width="2" height="12.9" fill="#0c0c0c"/>
<rect x="856.2" y="240" width="2.2" height="12.9" fill="#0c0c0c"/>
<rect x="852.1" y="236.5" width="1.3" height="15.6" fill="#161616"/>
<rect x="847.7" y="251.6" width="10.7" height="1.3" fill="#1a1a1a"/>
<rect x="941.9" y="240" width="10.7" height="12.9" fill="#f4f4f4"/>
<rect x="943.9" y="237.1" width="6.4" height="14.6" fill="url(#wh)"/>
<rect x="941.9" y="240" width="2" height="12.9" fill="#0c0c0c"/>
<rect x="950.4" y="240" width="2.2" height="12.9" fill="#0c0c0c"/>
<rect x="946.3" y="236.5" width="1.3" height="15.6" fill="#161616"/>
<rect x="941.9" y="251.6" width="10.7" height="1.3" fill="#1a1a1a"/>
<rect x="1036.1" y="240" width="10.7" height="12.9" fill="#f4f4f4"/>
<rect x="1038.1" y="237.1" width="6.4" height="14.6" fill="url(#wh)"/>
<rect x="1036.1" y="240" width="2" height="12.9" fill="#0c0c0c"/>
<rect x="1044.6" y="240" width="2.2" height="12.9" fill="#0c0c0c"/>
<rect x="1040.5" y="236.5" width="1.3" height="15.6" fill="#161616"/>
<rect x="1036.1" y="251.6" width="10.7" height="1.3" fill="#1a1a1a"/>
<rect x="1130.3" y="240" width="10.7" height="12.9" fill="#f4f4f4"/>
<rect x="1132.3" y="237.1" width="6.4" height="14.6" fill="url(#wh)"/>
<rect x="1130.3" y="240" width="2" height="12.9" fill="#0c0c0c"/>
<rect x="1138.8" y="240" width="2.2" height="12.9" fill="#0c0c0c"/>
<rect x="1134.7" y="236.5" width="1.3" height="15.6" fill="#161616"/>
<rect x="1130.3" y="251.6" width="10.7" height="1.3" fill="#1a1a1a"/>
<rect x="1224.5" y="240" width="10.7" height="12.9" fill="#f4f4f4"/>
<rect x="1226.5" y="237.1" width="6.4" height="14.6" fill="url(#wh)"/>
<rect x="1224.5" y="240" width="2" height="12.9" fill="#0c0c0c"/>
<rect x="1233" y="240" width="2.2" height="12.9" fill="#0c0c0c"/>
<rect x="1228.9" y="236.5" width="1.3" height="15.6" fill="#161616"/>
<rect x="1224.5" y="251.6" width="10.7" height="1.3" fill="#1a1a1a"/>
<rect x="578" y="409" width="289" height="6" fill="#dfdfdf"/>
<rect x="578.2" y="409" width="6.8" height="177" fill="#dfdfdf"/>
<rect x="867" y="360" width="7" height="55" fill="#dfdfdf"/>
<rect x="867" y="360" width="174" height="6" fill="#dfdfdf"/>
<rect x="1034" y="360" width="7" height="55" fill="#dfdfdf"/>
<rect x="1034" y="409" width="127" height="6" fill="#dfdfdf"/>
<rect x="1155" y="409" width="6" height="252" fill="#dfdfdf"/>
<rect x="577" y="408" width="290" height="1" fill="#1c1c1c"/>
<rect x="577" y="408" width="1.2" height="172" fill="#262626"/>
<rect x="866" y="359" width="175" height="1" fill="#1c1c1c"/>
<rect x="873" y="366" width="160" height="1" fill="#6e6e6e"/>
<rect x="1032" y="366" width="2" height="50" fill="#6e6e6e"/>
<rect x="1040" y="359" width="2" height="50" fill="#1c1c1c"/>
<rect x="1041" y="408" width="121" height="1" fill="#1c1c1c"/>
<rect x="1161" y="408" width="1.5" height="253" fill="#555"/>
<rect x="575" y="406" width="4" height="4" fill="#111"/>
<rect x="864" y="357" width="4" height="4" fill="#111"/>
<rect x="1038" y="357" width="4" height="4" fill="#111"/>
<rect x="1159" y="406" width="4" height="4" fill="#111"/>
<rect x="864" y="406" width="2" height="2" fill="#222"/>
<rect x="1040" y="406" width="2" height="2" fill="#222"/>
<rect x="577" y="578" width="2" height="2" fill="#222"/>
<rect x="589" y="497" width="59" height="1.6" fill="#6e6e6e"/>
<rect x="589" y="498.6" width="55" height="2" fill="#dfdfdf"/>
<rect x="643" y="500" width="1.3" height="161" fill="#6e6e6e"/>
<rect x="644.3" y="498" width="2.4" height="163" fill="#e4e4e4"/>
<rect x="646.7" y="497" width="1.3" height="164" fill="#4a4a4a"/>
<rect x="495" y="581" width="90" height="5" fill="#dfdfdf"/>
<rect x="495" y="587" width="150" height="1" fill="#505050"/>
<rect x="585" y="583.5" width="62" height="1.2" fill="#666"/>
<rect x="534" y="588" width="6" height="73" fill="#dfdfdf"/>
<rect x="540" y="588" width="1.3" height="73" fill="#666"/>
<rect x="708.3" y="580" width="1.6" height="62" fill="#8c8c8c"/>
<rect x="711" y="581" width="3" height="3" fill="#dfdfdf"/>
<rect x="711" y="583" width="246" height="1.5" fill="#3a3a3a"/>
<rect x="815" y="584" width="1.3" height="77" fill="#4a4a4a"/>
<rect x="816.3" y="585" width="2.7" height="76" fill="#e4e4e4"/>
<rect x="819" y="584" width="1.3" height="77" fill="#4a4a4a"/>
<rect x="647" y="643" width="63" height="2" fill="#dfdfdf"/>
<rect x="647" y="645" width="63" height="1.5" fill="#4a4a4a"/>
<rect x="709" y="645" width="1.5" height="16" fill="#777"/>
<rect x="959" y="580" width="1.6" height="34" fill="#333"/>
<rect x="959" y="617" width="1.6" height="44" fill="#555"/>
<rect x="960" y="614" width="194" height="2" fill="#dfdfdf"/>
<rect x="960" y="616" width="194" height="2" fill="#8a8a8a"/>
</svg>
<svg style="left:495px;top:158px" width="871" height="503" viewBox="495 158 871 503">
<path d="M586 585.5V539.5" stroke="#35d264" stroke-width="1.1" fill="none"/>
<path d="M587 539.5H765" stroke="#1a1a1a" stroke-width="1.1" stroke-dasharray="44 0.8" fill="none"/>
<path d="M587.5 416.5L766 538.5" stroke="#1a1a1a" stroke-width="0.9" fill="none"/>
<path d="M767 415V539" stroke="#1f8496" stroke-width="1.2" fill="none"/>
<path d="M587 539.5V415.3H767" stroke="#0b0bb4" stroke-width="3.6" fill="none"/>
<circle cx="586.5" cy="416.5" r="4.6" fill="none" stroke="#f01010" stroke-width="1.6"/>
<circle cx="767.3" cy="539.5" r="4.2" fill="#fff"/>
<g stroke-linejoin="round">
<rect x="1259" y="214" width="3" height="52" fill="#14d814"/>
<rect x="1260" y="264" width="52" height="3" fill="#d01818"/>
<rect x="1259" y="264.5" width="2.5" height="2.5" fill="#1818c8"/>
<path d="M1272 199H1318L1327 208V254L1318 263H1272L1263 254V208Z" fill="#8b8d8f" fill-opacity="0.93" stroke="#3b3c3d" stroke-width="1.4"/>
<path d="M1279 206H1311L1319 215V247L1311 256H1279L1271 247V215Z" fill="none" stroke="#cfd0d1" stroke-width="0.9"/>
<path d="M1279 199V206M1311 199V206M1279 256V263M1311 256V263M1263 215H1271M1263 247H1271M1319 215H1327M1319 247H1327" stroke="#55575a" stroke-width="1" fill="none"/>
<path d="M1263 238.5H1327" stroke="#d4d5d6" stroke-width="1.6" opacity="0.8"/>
<rect x="1319" y="240" width="3" height="13" fill="#b8b9ba" opacity="0.8"/>
<rect x="1325.5" y="240" width="2.5" height="13" fill="#222"/>
<text x="1295" y="235.6" text-anchor="middle" font-family="Liberation Sans, DejaVu Sans, sans-serif" font-size="13.5" fill="#e4e5e6">TOP</text>
<path d="M1295 165L1307 178.5H1283Z" fill="#8b8d8f" stroke="#4c4d4e" stroke-width="0.8"/>
<path d="M1295 296.5L1307 283.5H1283Z" fill="#8b8d8f" stroke="#4c4d4e" stroke-width="0.8"/>
<path d="M1229.5 231L1243 219.5V242.5Z" fill="#8b8d8f" stroke="#4c4d4e" stroke-width="0.8"/>
<path d="M1361 231L1347.5 219.5V242.5Z" fill="#8b8d8f" stroke="#4c4d4e" stroke-width="0.8"/>
<circle cx="1352.5" cy="173.3" r="7" fill="#8b8d8f" stroke="#4c4d4e" stroke-width="0.8"/>
<path d="M1275.5 171.5L1278.5 179.5Q1264 184 1256 193L1259 197.5L1245.5 199.5L1247.5 185L1251.5 188.5Q1260 177 1275.5 171.5Z" fill="#8b8d8f" stroke="#4c4d4e" stroke-width="0.8"/>
<path d="M1314.5 171.5L1311.5 179.5Q1326 184 1334 193L1331 197.5L1344.5 199.5L1342.5 185L1338.5 188.5Q1330 177 1314.5 171.5Z" fill="#8b8d8f" stroke="#4c4d4e" stroke-width="0.8"/>
<path d="M1340 267.5L1350.5 271.5V283.5L1340 288L1329.5 283.5V271.5Z" fill="#8b8d8f" stroke="#4c4d4e" stroke-width="0.9"/>
<path d="M1329.5 271.5L1340 276L1350.5 271.5M1340 276V288" fill="none" stroke="#4c4d4e" stroke-width="0.9"/>
</g>
<path d="M1342 633V625" stroke="#1f6a25" stroke-width="1.6"/><path d="M1342 619.5L1344.2 626H1339.8Z" fill="#1f6a25"/>
<path d="M1345 636H1353" stroke="#6a1f1f" stroke-width="1.6"/><path d="M1358.5 636L1352.5 638.2V633.8Z" fill="#6a1f1f"/>
<circle cx="1341.8" cy="636.2" r="2" fill="#16168a"/>
<text x="1342.5" y="617.5" font-family="DejaVu Sans, Liberation Sans, sans-serif" font-size="8.5" font-weight="bold" fill="#111">Y</text>
<text x="1343" y="634" font-family="DejaVu Sans, Liberation Sans, sans-serif" font-size="8.5" font-weight="bold" fill="#111">Z</text>
<text x="1359.5" y="634" font-family="DejaVu Sans, Liberation Sans, sans-serif" font-size="8.5" font-weight="bold" fill="#111">X</text>
</svg>
</body></html>
